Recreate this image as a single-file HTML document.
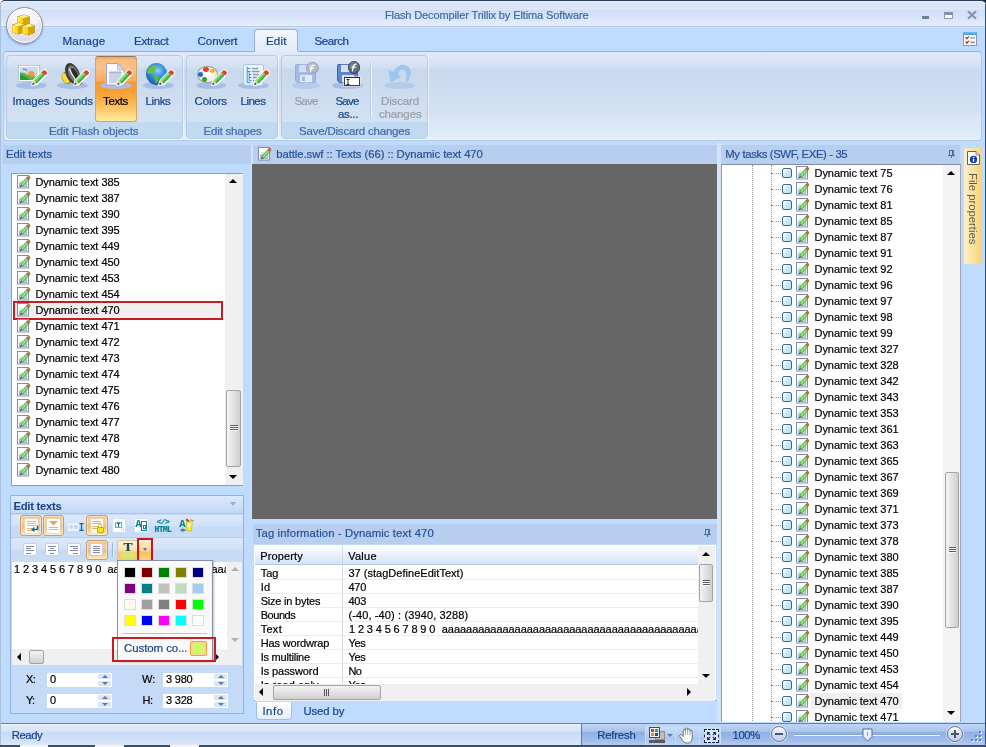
<!DOCTYPE html>
<html><head><meta charset="utf-8"><title>Flash Decompiler Trillix by Eltima Software</title>
<style>
*{box-sizing:border-box;margin:0;padding:0}
html,body{width:986px;height:747px;overflow:hidden;background:#bfdbff}
body{position:relative;font-family:"Liberation Sans",sans-serif;font-size:11px;color:#000}
.a{position:absolute}
.pi{position:absolute}
.t{position:absolute;white-space:nowrap;line-height:14px;-webkit-text-stroke:0.2px currentColor}
.rb{color:#15428b;font-size:11.3px}
.li{position:absolute;left:35px;white-space:nowrap;line-height:14px;font-size:11px}
.ti{position:absolute;left:814px;white-space:nowrap;line-height:14px;font-size:11px}
.cb{position:absolute;left:782px;width:10px;height:10px;border:1px solid #3d678e;border-radius:2px;background:linear-gradient(135deg,#ffffff 10%,#cfeaf8 45%,#b3def4 100%)}
.hd{position:absolute;left:771px;width:10px;height:0;border-top:1px dotted #9a9a9a}
.sw{position:absolute;width:12px;height:11px;border:1px solid #d8dde6}
</style></head><body><div id="w" style="position:absolute;left:0;top:0;width:986px;height:747px;will-change:transform">

<div class="a" style="left:0;top:0;width:986px;height:8px;background:linear-gradient(90deg,#fff 0,#fff 50%,#1a2233 50%)"></div>
<div class="a" style="left:0;top:0;width:986px;height:26px;background:linear-gradient(#e6f2fd 0,#dde9f9 5%,#d9e5f8 28%,#deebfa 33%,#cfddf5 36%,#d6e3f7 60%,#e3effc 100%);border-top:1px solid #2f3e5e;border-radius:5px 5px 0 0"></div>
<div class="a" style="left:0;top:26px;width:986px;height:27px;background:linear-gradient(#cde2fb 0,#cde2fb 1px,#bfdbff 1.5px);border-top:1px solid #bccbe3"></div>
<div class="t" style="left:385px;top:7.6px;font-size:11px;color:#3e6aaa;letter-spacing:-0.115px">Flash Decompiler Trillix by Eltima Software</div>
<div class="a" style="left:922px;top:16.4px;width:7px;height:2.6px;background:#6e7f9f"></div>
<div class="a" style="left:944px;top:12px;width:9.2px;height:7px;border:1px solid #8a99b6;border-top:3px solid #7f8fad;background:#fff"></div>
<svg class="a" style="left:966.6px;top:11px" width="10" height="8" viewBox="0 0 10 8"><path d="M1 0.3L9 7.7M9 0.3L1 7.7" stroke="#8192b0" stroke-width="2.1"/></svg>
<div class="a" style="left:6px;top:7px;width:37px;height:37px;border-radius:50%;background:radial-gradient(circle at 50% 30%,#ffffff 0,#f3f3f8 40%,#dcdbea 70%,#f4f4fa 92%,#ffffff 100%);border:1px solid #8a93a6;box-shadow:0 1px 2px rgba(60,70,90,.45),inset 0 0 0 1px rgba(255,255,255,.8)"></div>
<svg class="a" style="left:16.5px;top:13.5px" width="13" height="13" viewBox="0 0 13 13"><path d="M0.3 2.6 L7.2 0.4 L12.6 2.2 L12.6 9.8 L6 12.6 L0.3 10.4Z" fill="#9a7600"/><path d="M0.6 2.9 L6 4.6 L6 12.2 L0.6 10.2Z" fill="#ffd914"/><path d="M0.6 2.9 L2.6 3.5 L2.6 11 L0.6 10.2Z" fill="#ffe95c"/><path d="M6 4.6 L12.3 2.5 L12.3 9.6 L6 12.2Z" fill="#d9a300"/><path d="M0.6 2.9 L7.2 0.8 L12.3 2.5 L6 4.6Z" fill="#fff08a"/></svg>
<svg class="a" style="left:11.5px;top:22px" width="13" height="13" viewBox="0 0 13 13"><path d="M0.3 2.6 L7.2 0.4 L12.6 2.2 L12.6 9.8 L6 12.6 L0.3 10.4Z" fill="#9a7600"/><path d="M0.6 2.9 L6 4.6 L6 12.2 L0.6 10.2Z" fill="#ffd914"/><path d="M0.6 2.9 L2.6 3.5 L2.6 11 L0.6 10.2Z" fill="#ffe95c"/><path d="M6 4.6 L12.3 2.5 L12.3 9.6 L6 12.2Z" fill="#d9a300"/><path d="M0.6 2.9 L7.2 0.8 L12.3 2.5 L6 4.6Z" fill="#fff08a"/></svg>
<svg class="a" style="left:21.5px;top:22.8px" width="13" height="13" viewBox="0 0 13 13"><path d="M0.3 2.6 L7.2 0.4 L12.6 2.2 L12.6 9.8 L6 12.6 L0.3 10.4Z" fill="#9a7600"/><path d="M0.6 2.9 L6 4.6 L6 12.2 L0.6 10.2Z" fill="#ffd914"/><path d="M0.6 2.9 L2.6 3.5 L2.6 11 L0.6 10.2Z" fill="#ffe95c"/><path d="M6 4.6 L12.3 2.5 L12.3 9.6 L6 12.2Z" fill="#d9a300"/><path d="M0.6 2.9 L7.2 0.8 L12.3 2.5 L6 4.6Z" fill="#fff08a"/></svg>
<div class="a" style="left:254px;top:29px;width:44px;height:25px;background:linear-gradient(#f4f8fe,#dfe9f6);border:1px solid #8db2e3;border-bottom:none;border-radius:4px 4px 0 0"></div>
<div class="t" style="left:62.5px;top:33.8px;font-size:11.6px;color:#15428b;letter-spacing:0.182px">Manage</div>
<div class="t" style="left:134px;top:33.8px;font-size:11.6px;color:#15428b;letter-spacing:-0.225px">Extract</div>
<div class="t" style="left:197.5px;top:33.8px;font-size:11.6px;color:#15428b;letter-spacing:-0.087px">Convert</div>
<div class="t" style="left:266px;top:33.8px;font-size:11.6px;color:#15428b;letter-spacing:0.129px">Edit</div>
<div class="t" style="left:314.5px;top:33.8px;font-size:11.6px;color:#15428b;letter-spacing:-0.456px">Search</div>
<div class="a" style="left:963px;top:32px;width:14px;height:13.6px;background:#fdfdfd;border:1px solid #8d96a6;border-top:none;border-radius:1px"></div>
<div class="a" style="left:963px;top:32px;width:14px;height:3px;background:linear-gradient(#6fc0f2,#3f9be0);border-radius:1px 1px 0 0"></div>
<svg class="a" style="left:965px;top:36px" width="11" height="9" viewBox="0 0 11 9"><path d="M0.6 1.2L1.9 2.8L3.8 0.4M0.6 5.6L1.9 7.2L3.8 4.8" stroke="#b3201a" stroke-width="1.2" fill="none"/><path d="M5.2 2H10M5.2 6.3H10" stroke="#9aa0aa" stroke-width="1.7"/></svg>
<div class="a" style="left:3px;top:51px;width:979px;height:90px;border:1px solid #b2cbea;border-top-color:#8db2e3;border-radius:4px;background:linear-gradient(#dfe9f6 0,#d5e1f2 17%,#c9d9ee 19.5%,#d3e1f3 65%,#e1eefb 97%,#e8f4fd 100%)"></div>
<div class="a" style="left:255px;top:50.5px;width:43px;height:2px;background:#e0e9f6"></div>
<div class="a" style="left:6px;top:55px;width:177px;height:84px;border:1px solid #b4cbe8;border-radius:4px;background:linear-gradient(#dee9f7 0,#d3e0f1 14%,#c8d8ed 16.5%,#d3e1f2 80%);box-shadow:1px 0 0 rgba(255,255,255,.55),0 1px 0 rgba(255,255,255,.55);overflow:hidden"><div class="a" style="left:0;bottom:0;width:100%;height:16px;background:#c2d9f2"></div></div>
<div class="t" style="left:49px;top:123.6px;font-size:11.5px;color:#3e6aaa;letter-spacing:-0.070px">Edit Flash objects</div>
<div class="a" style="left:186px;top:55px;width:92px;height:84px;border:1px solid #b4cbe8;border-radius:4px;background:linear-gradient(#dee9f7 0,#d3e0f1 14%,#c8d8ed 16.5%,#d3e1f2 80%);box-shadow:1px 0 0 rgba(255,255,255,.55),0 1px 0 rgba(255,255,255,.55);overflow:hidden"><div class="a" style="left:0;bottom:0;width:100%;height:16px;background:#c2d9f2"></div></div>
<div class="t" style="left:203.5px;top:123.6px;font-size:11.5px;color:#3e6aaa;letter-spacing:-0.192px">Edit shapes</div>
<div class="a" style="left:281px;top:55px;width:147px;height:84px;border:1px solid #b4cbe8;border-radius:4px;background:linear-gradient(#dee9f7 0,#d3e0f1 14%,#c8d8ed 16.5%,#d3e1f2 80%);box-shadow:1px 0 0 rgba(255,255,255,.55),0 1px 0 rgba(255,255,255,.55);overflow:hidden"><div class="a" style="left:0;bottom:0;width:100%;height:16px;background:#c2d9f2"></div></div>
<div class="t" style="left:299px;top:123.6px;font-size:11.5px;color:#3e6aaa;letter-spacing:-0.203px">Save/Discard changes</div>
<div class="a" style="left:95px;top:56px;width:42px;height:66px;border:1px solid #cfa560;border-top-color:#8f7a58;border-radius:3px;background:linear-gradient(#eaa968 0,#f9bc82 5%,#fbbf88 18%,#f9aa60 38%,#f7972a 40%,#f9a53a 60%,#fcc968 82%,#fee9a4 100%)"></div>
<div class="t" style="left:12.5px;top:93.6px;font-size:11.5px;color:#15428b;letter-spacing:-0.120px">Images</div>
<div class="t" style="left:54.5px;top:93.6px;font-size:11.5px;color:#15428b;letter-spacing:-0.086px">Sounds</div>
<div class="t" style="left:103px;top:93.6px;font-size:11.5px;color:#000;letter-spacing:-0.369px">Texts</div>
<div class="t" style="left:145.5px;top:93.6px;font-size:11.5px;color:#15428b;letter-spacing:-0.372px">Links</div>
<div class="t" style="left:194.5px;top:93.6px;font-size:11.5px;color:#15428b;letter-spacing:-0.122px">Colors</div>
<div class="t" style="left:240.5px;top:93.6px;font-size:11.5px;color:#15428b;letter-spacing:-0.500px">Lines</div>
<div class="t" style="left:294.5px;top:93.6px;font-size:11.5px;color:#979da8;letter-spacing:-0.805px">Save</div>
<div class="t" style="left:335.5px;top:93.6px;font-size:11.5px;color:#15428b;letter-spacing:-0.805px">Save</div>
<div class="t" style="left:338px;top:106.6px;font-size:11.5px;color:#15428b;letter-spacing:-0.347px">as...</div>
<div class="t" style="left:381px;top:93.6px;font-size:11.5px;color:#979da8;letter-spacing:-0.141px">Discard</div>
<div class="t" style="left:379px;top:106.6px;font-size:11.5px;color:#979da8;letter-spacing:-0.141px">changes</div>
<div class="a" style="left:15.5px;top:81.5px;width:31px;height:7px;border-radius:50%;background:rgba(160,186,226,.9)"></div>
<div class="a" style="left:18px;top:65px;width:22px;height:17px;background:#fbfcfe;border:1px solid #b9c6dc"></div>
<svg class="a" style="left:20px;top:67px" width="18" height="13" viewBox="0 0 18 13"><rect width="18" height="13" fill="#c9daf1"/><circle cx="11.3" cy="7.2" r="3.2" fill="#f29a2e"/><path d="M0 5.2 Q5 5.5 9 8.5 Q13 11 18 8.2 V13 H0Z" fill="#55b944"/><path d="M0 7.5 Q5 8 10 13 H0Z" fill="#2f9a32"/><path d="M3 2.2 Q4.3 1.4 5.2 2.8 Q6.2 2.2 7.2 3.6" stroke="#3b5aa0" stroke-width="0.9" fill="none"/></svg>
<svg class="a" style="left:31.1px;top:69.4px;overflow:visible" width="18" height="18" viewBox="0 0 18 18"><path d="M1.2 16 L2.4 11.6 L11.6 1.9 Q13.3 0.4 15.0 1.9 Q16.9 3.6 15.3 5.4 L6.0 15.0 Z" fill="#fff" stroke="#fff" stroke-width="2" stroke-linejoin="round"/><path d="M2.4 11.6 L10.3 3.3 L13.5 6.3 L5.6 14.6 Z" fill="#5ccc4c"/><path d="M2.4 11.6 L10.3 3.3 L11.4 4.3 L3.5 12.6 Z" fill="#9be88a"/><path d="M4.6 13.7 L12.5 5.4 L13.5 6.3 L5.6 14.6 Z" fill="#3a9f38"/><path d="M10.3 3.3 L11.6 1.9 Q13.3 0.4 15.0 1.9 Q16.9 3.6 15.3 5.4 L13.5 6.3 Z" fill="#d9412c"/><path d="M11.3 2.3 Q12.9 0.9 14.2 1.9" stroke="#f08a78" stroke-width="0.9" fill="none"/><path d="M2.4 11.6 L5.6 14.6 L1.2 16 Z" fill="#e6c9a0"/><path d="M1.2 16 L1.9 13.6 L3.6 15.2 Z" fill="#3a2a20"/></svg>
<div class="a" style="left:57.3px;top:81.5px;width:31px;height:7px;border-radius:50%;background:rgba(160,186,226,.9)"></div>
<svg class="a" style="left:60px;top:61px" width="24" height="25" viewBox="0 0 24 25"><ellipse cx="6.6" cy="17" rx="4.6" ry="6.4" transform="rotate(-25 6.6 17)" fill="#b58a10"/><ellipse cx="5.6" cy="17.2" rx="3" ry="5.4" transform="rotate(-25 5.6 17.2)" fill="#f8d84a"/><ellipse cx="12.6" cy="12.6" rx="6.6" ry="11.2" transform="rotate(-25 12.6 12.6)" fill="#3b3b3b"/><ellipse cx="13.6" cy="13" rx="4.7" ry="9" transform="rotate(-25 13.6 13)" fill="#7c7c7c"/><ellipse cx="14.5" cy="13.5" rx="3.1" ry="6.8" transform="rotate(-25 14.5 13.5)" fill="#2c2c2c"/><path d="M9.6 8.2 Q11.5 13.5 16 19.6" stroke="#e8e8e8" stroke-width="1.5" fill="none" stroke-linecap="round"/><ellipse cx="20" cy="20.6" rx="2" ry="2.6" fill="none" stroke="#2c2c2c" stroke-width="1"/></svg>
<svg class="a" style="left:73.1px;top:69.4px;overflow:visible" width="18" height="18" viewBox="0 0 18 18"><path d="M1.2 16 L2.4 11.6 L11.6 1.9 Q13.3 0.4 15.0 1.9 Q16.9 3.6 15.3 5.4 L6.0 15.0 Z" fill="#fff" stroke="#fff" stroke-width="2" stroke-linejoin="round"/><path d="M2.4 11.6 L10.3 3.3 L13.5 6.3 L5.6 14.6 Z" fill="#5ccc4c"/><path d="M2.4 11.6 L10.3 3.3 L11.4 4.3 L3.5 12.6 Z" fill="#9be88a"/><path d="M4.6 13.7 L12.5 5.4 L13.5 6.3 L5.6 14.6 Z" fill="#3a9f38"/><path d="M10.3 3.3 L11.6 1.9 Q13.3 0.4 15.0 1.9 Q16.9 3.6 15.3 5.4 L13.5 6.3 Z" fill="#d9412c"/><path d="M11.3 2.3 Q12.9 0.9 14.2 1.9" stroke="#f08a78" stroke-width="0.9" fill="none"/><path d="M2.4 11.6 L5.6 14.6 L1.2 16 Z" fill="#e6c9a0"/><path d="M1.2 16 L1.9 13.6 L3.6 15.2 Z" fill="#3a2a20"/></svg>
<div class="a" style="left:100px;top:81.5px;width:31.5px;height:7px;border-radius:50%;background:rgba(168,192,230,.95)"></div>
<svg class="a" style="left:105.5px;top:62.7px" width="19" height="23" viewBox="0 0 19 23"><path d="M0.5 0.5 H11.5 L18 7 V22 H0.5Z" fill="#fcfdff" stroke="#9daac2"/><path d="M11.5 0.5 V7 H18Z" fill="#d3dcec" stroke="#9daac2" stroke-width=".7"/><rect x="3" y="8.5" width="12.5" height="2.2" fill="#a9b6d2"/><rect x="3" y="10.7" width="12.5" height="9.5" fill="#cad3e8"/></svg>
<svg class="a" style="left:115.8px;top:69.4px;overflow:visible" width="18" height="18" viewBox="0 0 18 18"><path d="M1.2 16 L2.4 11.6 L11.6 1.9 Q13.3 0.4 15.0 1.9 Q16.9 3.6 15.3 5.4 L6.0 15.0 Z" fill="#fff" stroke="#fff" stroke-width="2" stroke-linejoin="round"/><path d="M2.4 11.6 L10.3 3.3 L13.5 6.3 L5.6 14.6 Z" fill="#5ccc4c"/><path d="M2.4 11.6 L10.3 3.3 L11.4 4.3 L3.5 12.6 Z" fill="#9be88a"/><path d="M4.6 13.7 L12.5 5.4 L13.5 6.3 L5.6 14.6 Z" fill="#3a9f38"/><path d="M10.3 3.3 L11.6 1.9 Q13.3 0.4 15.0 1.9 Q16.9 3.6 15.3 5.4 L13.5 6.3 Z" fill="#d9412c"/><path d="M11.3 2.3 Q12.9 0.9 14.2 1.9" stroke="#f08a78" stroke-width="0.9" fill="none"/><path d="M2.4 11.6 L5.6 14.6 L1.2 16 Z" fill="#e6c9a0"/><path d="M1.2 16 L1.9 13.6 L3.6 15.2 Z" fill="#3a2a20"/></svg>
<div class="a" style="left:142.5px;top:81.5px;width:31px;height:7px;border-radius:50%;background:rgba(160,186,226,.9)"></div>
<div class="a" style="left:146px;top:63px;width:21px;height:21.5px;border-radius:50%;background:radial-gradient(circle at 55% 35%,#8fd0ff 0,#3a92e2 35%,#1f66c2 70%,#0f418f 100%)"></div>
<svg class="a" style="left:146px;top:63px" width="21" height="22" viewBox="0 0 21 22"><path d="M1.6 7 Q4 2.5 8.5 1.8 Q10.5 3 9 5 Q10.8 6.5 8.8 8.3 Q7.8 11.5 5 10.3 Q3.4 12.6 1.4 10.2 Q0.8 8.6 1.6 7Z" fill="#66c246"/><path d="M8 13 Q11 11.5 13 14 Q13.5 18 10.5 20.4 Q8.5 19 8.6 16 Q7.4 14.4 8 13Z" fill="#58b83e"/><path d="M12.5 3 Q14.8 3.2 15.6 5 Q14.2 5.6 12.8 4.6Z" fill="#66c246"/></svg>
<svg class="a" style="left:158.0px;top:69.4px;overflow:visible" width="18" height="18" viewBox="0 0 18 18"><path d="M1.2 16 L2.4 11.6 L11.6 1.9 Q13.3 0.4 15.0 1.9 Q16.9 3.6 15.3 5.4 L6.0 15.0 Z" fill="#fff" stroke="#fff" stroke-width="2" stroke-linejoin="round"/><path d="M2.4 11.6 L10.3 3.3 L13.5 6.3 L5.6 14.6 Z" fill="#5ccc4c"/><path d="M2.4 11.6 L10.3 3.3 L11.4 4.3 L3.5 12.6 Z" fill="#9be88a"/><path d="M4.6 13.7 L12.5 5.4 L13.5 6.3 L5.6 14.6 Z" fill="#3a9f38"/><path d="M10.3 3.3 L11.6 1.9 Q13.3 0.4 15.0 1.9 Q16.9 3.6 15.3 5.4 L13.5 6.3 Z" fill="#d9412c"/><path d="M11.3 2.3 Q12.9 0.9 14.2 1.9" stroke="#f08a78" stroke-width="0.9" fill="none"/><path d="M2.4 11.6 L5.6 14.6 L1.2 16 Z" fill="#e6c9a0"/><path d="M1.2 16 L1.9 13.6 L3.6 15.2 Z" fill="#3a2a20"/></svg>
<div class="a" style="left:195.8px;top:81.5px;width:30.5px;height:7px;border-radius:50%;background:rgba(160,186,226,.9)"></div>
<div class="a" style="left:197px;top:65.8px;width:20.5px;height:17.5px;border-radius:50%;background:radial-gradient(circle at 45% 40%,#ffffff 0,#f2f2f2 55%,#d2d2d2 100%);border:1px solid #9c9c9c"></div>
<div class="a" style="left:203.1px;top:67.13499999999999px;width:5.8px;height:4.93px;border-radius:50%;background:#e8402a"></div>
<div class="a" style="left:209.7px;top:68.875px;width:5.0px;height:4.25px;border-radius:50%;background:#e8b820"></div>
<div class="a" style="left:198.20000000000002px;top:72.19000000000001px;width:5.2px;height:4.42px;border-radius:50%;background:#2a66d6"></div>
<div class="a" style="left:201.7px;top:76.735px;width:5.8px;height:4.93px;border-radius:50%;background:#2fa52f"></div>
<svg class="a" style="left:210.8px;top:69.4px;overflow:visible" width="18" height="18" viewBox="0 0 18 18"><path d="M1.2 16 L2.4 11.6 L11.6 1.9 Q13.3 0.4 15.0 1.9 Q16.9 3.6 15.3 5.4 L6.0 15.0 Z" fill="#fff" stroke="#fff" stroke-width="2" stroke-linejoin="round"/><path d="M2.4 11.6 L10.3 3.3 L13.5 6.3 L5.6 14.6 Z" fill="#5ccc4c"/><path d="M2.4 11.6 L10.3 3.3 L11.4 4.3 L3.5 12.6 Z" fill="#9be88a"/><path d="M4.6 13.7 L12.5 5.4 L13.5 6.3 L5.6 14.6 Z" fill="#3a9f38"/><path d="M10.3 3.3 L11.6 1.9 Q13.3 0.4 15.0 1.9 Q16.9 3.6 15.3 5.4 L13.5 6.3 Z" fill="#d9412c"/><path d="M11.3 2.3 Q12.9 0.9 14.2 1.9" stroke="#f08a78" stroke-width="0.9" fill="none"/><path d="M2.4 11.6 L5.6 14.6 L1.2 16 Z" fill="#e6c9a0"/><path d="M1.2 16 L1.9 13.6 L3.6 15.2 Z" fill="#3a2a20"/></svg>
<div class="a" style="left:238px;top:81.5px;width:31px;height:7px;border-radius:50%;background:rgba(160,186,226,.9)"></div>
<div class="a" style="left:242.5px;top:64px;width:21.5px;height:21.5px;background:linear-gradient(#f2f8fe,#dfecfb);border:1px solid #a9c5ea;border-radius:3px"></div>
<svg class="a" style="left:242.5px;top:64px" width="22" height="22" viewBox="0 0 22 22"><path d="M4.2 2.5 V18.5 M4.2 4.5 H7.5 M4.2 7.5 H7.5 M6.2 7.5 V16.5 M6.2 10.5 H8.5 M6.2 13.5 H8.5 M6.2 16.5 H8.5 M4.2 18.5 H7.5" stroke="#3f93dc" stroke-width="1" fill="none"/><path d="M9 4.5 H15.5 M9 7.5 H16.5 M10 10.5 H16 M10 13.5 H14.5 M10 16.5 H13" stroke="#8f9aa8" stroke-width="1.3" fill="none"/></svg>
<svg class="a" style="left:252.8px;top:69.4px;overflow:visible" width="18" height="18" viewBox="0 0 18 18"><path d="M1.2 16 L2.4 11.6 L11.6 1.9 Q13.3 0.4 15.0 1.9 Q16.9 3.6 15.3 5.4 L6.0 15.0 Z" fill="#fff" stroke="#fff" stroke-width="2" stroke-linejoin="round"/><path d="M2.4 11.6 L10.3 3.3 L13.5 6.3 L5.6 14.6 Z" fill="#5ccc4c"/><path d="M2.4 11.6 L10.3 3.3 L11.4 4.3 L3.5 12.6 Z" fill="#9be88a"/><path d="M4.6 13.7 L12.5 5.4 L13.5 6.3 L5.6 14.6 Z" fill="#3a9f38"/><path d="M10.3 3.3 L11.6 1.9 Q13.3 0.4 15.0 1.9 Q16.9 3.6 15.3 5.4 L13.5 6.3 Z" fill="#d9412c"/><path d="M11.3 2.3 Q12.9 0.9 14.2 1.9" stroke="#f08a78" stroke-width="0.9" fill="none"/><path d="M2.4 11.6 L5.6 14.6 L1.2 16 Z" fill="#e6c9a0"/><path d="M1.2 16 L1.9 13.6 L3.6 15.2 Z" fill="#3a2a20"/></svg>
<div class="a" style="left:291.8px;top:81.5px;width:28.5px;height:7px;border-radius:50%;background:rgba(176,198,232,.8)"></div>
<svg class="a" style="left:295px;top:63.8px" width="21" height="19" viewBox="0 0 21 19"><path d="M0.5 1.5 Q0.5 0.5 1.5 0.5 H19.5 Q20.5 0.5 20.5 1.5 V17.5 Q20.5 18.5 19.5 18.5 H2.5 L0.5 16.5Z" fill="#a3bbe9" stroke="#92abdc"/><rect x="4" y="0.8" width="9" height="7.2" fill="#d3ddf0"/><rect x="5" y="11" width="12" height="7.3" fill="#e3e9f5"/><rect x="7" y="12.5" width="3" height="4.5" fill="#a9b9dc"/></svg>
<div class="a" style="left:306.2px;top:61.8px;width:12.4px;height:12.4px;border-radius:50%;background:radial-gradient(circle at 40% 30%,#c3c9d6,#a2aabb);border:1px solid #98a1b4"></div>
<svg class="a" style="left:308.4px;top:63.5px" width="8" height="9" viewBox="0 0 8 9"><path d="M6.3 1 Q3.6 1.2 3.3 4 L2.4 8 M2 4.2 H5.3" stroke="#fff" stroke-width="1.2" fill="none" stroke-linecap="round"/></svg>
<div class="a" style="left:332.3px;top:81.5px;width:31px;height:7px;border-radius:50%;background:rgba(160,186,226,.9)"></div>
<svg class="a" style="left:337.3px;top:63.8px" width="21" height="19" viewBox="0 0 21 19"><path d="M0.5 1.5 Q0.5 0.5 1.5 0.5 H19.5 Q20.5 0.5 20.5 1.5 V17.5 Q20.5 18.5 19.5 18.5 H2.5 L0.5 16.5Z" fill="#5f86d3" stroke="#3f63b0"/><rect x="4" y="0.8" width="9" height="7.2" fill="#d9dfea"/><rect x="5" y="11" width="12" height="7.3" fill="#dfe5f0"/><rect x="7" y="12.5" width="3" height="4.5" fill="#5f86d3"/></svg>
<div class="a" style="left:348.1px;top:61.3px;width:12.4px;height:12.4px;border-radius:50%;background:radial-gradient(circle at 40% 30%,#7d8796,#4f5968);border:1px solid #3f4858"></div>
<svg class="a" style="left:350.3px;top:63.0px" width="8" height="9" viewBox="0 0 8 9"><path d="M6.3 1 Q3.6 1.2 3.3 4 L2.4 8 M2 4.2 H5.3" stroke="#fff" stroke-width="1.2" fill="none" stroke-linecap="round"/></svg>
<div class="a" style="left:344.4px;top:77px;width:16px;height:9px;background:#fff;border:1px solid #3c3c3c;border-top:1.5px solid #2a2a2a;box-shadow:0 0 0 .6px #e8e8e8"></div>
<svg class="a" style="left:346px;top:78.6px" width="4" height="6" viewBox="0 0 4 6"><path d="M0.5 0.5H3.5M2 0.5V5.5M0.5 5.5H3.5" stroke="#111" stroke-width=".9" fill="none"/></svg>
<div class="a" style="left:384px;top:81.5px;width:31px;height:7px;border-radius:50%;background:rgba(176,198,232,.8)"></div>
<svg class="a" style="left:387px;top:64px" width="25" height="20" viewBox="0 0 25 20"><path d="M2 6.5 L6.5 8.5 Q10 1 16.5 1.3 Q23.5 2 23.3 9 Q23 14 20 17.5 L19 16 Q20.5 12 19.5 8.5 Q18 4.8 14.5 5.3 Q11.5 6 10 10.5 L13.5 12.5 L4 18 Z" fill="#9cc5f0" stroke="#8fbdee" stroke-width=".5"/></svg>
<div class="a" style="left:371px;top:61.5px;width:1px;height:55px;background:#eaf2fb;box-shadow:-1px 0 0 #b9cde8"></div>
<div class="a" style="left:3px;top:145px;width:248px;height:19px;background:#b8ceee"></div>
<div class="t" style="left:6px;top:146.6px;font-size:11.3px;color:#24509a;letter-spacing:-0.047px">Edit texts</div>
<div class="a" style="left:11px;top:173px;width:232px;height:313px;background:#fff;border:1px solid #7f9fd0"></div>
<svg class="pi" style="left:17px;top:174.2px" width="14" height="15" viewBox="0 0 14 15"><rect x="0.5" y="1.5" width="11" height="12.5" fill="#fefefe" stroke="#7d8cb0"/><path d="M2.5 6.8H6" stroke="#c3cde2" stroke-width="1"/><rect x="2.5" y="8.8" width="7" height="3.7" fill="#cbd5e9" stroke="#a9b5d0" stroke-width="1"/><g transform="translate(-0.6,0.7)"><path d="M4.4 9.6 L10.1 3.1 L12.3 5.0 L6.6 11.5 Z" fill="#6ed65c" stroke="#45a541" stroke-width="0.7"/><path d="M5.6 10.4 L11.1 4.2" stroke="#a9f098" stroke-width="0.9"/><path d="M10.1 3.1 L11.3 1.7 Q12.6 1.0 13.4 2.2 Q14 3.4 13.4 3.9 L12.3 5.0 Z" fill="#db5a44" stroke="#c4442f" stroke-width="0.4"/><path d="M4.4 9.6 L6.6 11.5 L3.6 12.5 Z" fill="#7a6a50"/><path d="M4.0 11.4 L4.9 12.1 L3.6 12.5 Z" fill="#222"/></g></svg>
<div class="t" style="left:35.4px;top:174.6px;font-size:11px;color:#000;letter-spacing:-0.049px">Dynamic text 385</div>
<svg class="pi" style="left:17px;top:190.2px" width="14" height="15" viewBox="0 0 14 15"><rect x="0.5" y="1.5" width="11" height="12.5" fill="#fefefe" stroke="#7d8cb0"/><path d="M2.5 6.8H6" stroke="#c3cde2" stroke-width="1"/><rect x="2.5" y="8.8" width="7" height="3.7" fill="#cbd5e9" stroke="#a9b5d0" stroke-width="1"/><g transform="translate(-0.6,0.7)"><path d="M4.4 9.6 L10.1 3.1 L12.3 5.0 L6.6 11.5 Z" fill="#6ed65c" stroke="#45a541" stroke-width="0.7"/><path d="M5.6 10.4 L11.1 4.2" stroke="#a9f098" stroke-width="0.9"/><path d="M10.1 3.1 L11.3 1.7 Q12.6 1.0 13.4 2.2 Q14 3.4 13.4 3.9 L12.3 5.0 Z" fill="#db5a44" stroke="#c4442f" stroke-width="0.4"/><path d="M4.4 9.6 L6.6 11.5 L3.6 12.5 Z" fill="#7a6a50"/><path d="M4.0 11.4 L4.9 12.1 L3.6 12.5 Z" fill="#222"/></g></svg>
<div class="t" style="left:35.4px;top:190.6px;font-size:11px;color:#000;letter-spacing:-0.049px">Dynamic text 387</div>
<svg class="pi" style="left:17px;top:206.2px" width="14" height="15" viewBox="0 0 14 15"><rect x="0.5" y="1.5" width="11" height="12.5" fill="#fefefe" stroke="#7d8cb0"/><path d="M2.5 6.8H6" stroke="#c3cde2" stroke-width="1"/><rect x="2.5" y="8.8" width="7" height="3.7" fill="#cbd5e9" stroke="#a9b5d0" stroke-width="1"/><g transform="translate(-0.6,0.7)"><path d="M4.4 9.6 L10.1 3.1 L12.3 5.0 L6.6 11.5 Z" fill="#6ed65c" stroke="#45a541" stroke-width="0.7"/><path d="M5.6 10.4 L11.1 4.2" stroke="#a9f098" stroke-width="0.9"/><path d="M10.1 3.1 L11.3 1.7 Q12.6 1.0 13.4 2.2 Q14 3.4 13.4 3.9 L12.3 5.0 Z" fill="#db5a44" stroke="#c4442f" stroke-width="0.4"/><path d="M4.4 9.6 L6.6 11.5 L3.6 12.5 Z" fill="#7a6a50"/><path d="M4.0 11.4 L4.9 12.1 L3.6 12.5 Z" fill="#222"/></g></svg>
<div class="t" style="left:35.4px;top:206.6px;font-size:11px;color:#000;letter-spacing:-0.049px">Dynamic text 390</div>
<svg class="pi" style="left:17px;top:222.2px" width="14" height="15" viewBox="0 0 14 15"><rect x="0.5" y="1.5" width="11" height="12.5" fill="#fefefe" stroke="#7d8cb0"/><path d="M2.5 6.8H6" stroke="#c3cde2" stroke-width="1"/><rect x="2.5" y="8.8" width="7" height="3.7" fill="#cbd5e9" stroke="#a9b5d0" stroke-width="1"/><g transform="translate(-0.6,0.7)"><path d="M4.4 9.6 L10.1 3.1 L12.3 5.0 L6.6 11.5 Z" fill="#6ed65c" stroke="#45a541" stroke-width="0.7"/><path d="M5.6 10.4 L11.1 4.2" stroke="#a9f098" stroke-width="0.9"/><path d="M10.1 3.1 L11.3 1.7 Q12.6 1.0 13.4 2.2 Q14 3.4 13.4 3.9 L12.3 5.0 Z" fill="#db5a44" stroke="#c4442f" stroke-width="0.4"/><path d="M4.4 9.6 L6.6 11.5 L3.6 12.5 Z" fill="#7a6a50"/><path d="M4.0 11.4 L4.9 12.1 L3.6 12.5 Z" fill="#222"/></g></svg>
<div class="t" style="left:35.4px;top:222.6px;font-size:11px;color:#000;letter-spacing:-0.049px">Dynamic text 395</div>
<svg class="pi" style="left:17px;top:238.2px" width="14" height="15" viewBox="0 0 14 15"><rect x="0.5" y="1.5" width="11" height="12.5" fill="#fefefe" stroke="#7d8cb0"/><path d="M2.5 6.8H6" stroke="#c3cde2" stroke-width="1"/><rect x="2.5" y="8.8" width="7" height="3.7" fill="#cbd5e9" stroke="#a9b5d0" stroke-width="1"/><g transform="translate(-0.6,0.7)"><path d="M4.4 9.6 L10.1 3.1 L12.3 5.0 L6.6 11.5 Z" fill="#6ed65c" stroke="#45a541" stroke-width="0.7"/><path d="M5.6 10.4 L11.1 4.2" stroke="#a9f098" stroke-width="0.9"/><path d="M10.1 3.1 L11.3 1.7 Q12.6 1.0 13.4 2.2 Q14 3.4 13.4 3.9 L12.3 5.0 Z" fill="#db5a44" stroke="#c4442f" stroke-width="0.4"/><path d="M4.4 9.6 L6.6 11.5 L3.6 12.5 Z" fill="#7a6a50"/><path d="M4.0 11.4 L4.9 12.1 L3.6 12.5 Z" fill="#222"/></g></svg>
<div class="t" style="left:35.4px;top:238.6px;font-size:11px;color:#000;letter-spacing:-0.049px">Dynamic text 449</div>
<svg class="pi" style="left:17px;top:254.2px" width="14" height="15" viewBox="0 0 14 15"><rect x="0.5" y="1.5" width="11" height="12.5" fill="#fefefe" stroke="#7d8cb0"/><path d="M2.5 6.8H6" stroke="#c3cde2" stroke-width="1"/><rect x="2.5" y="8.8" width="7" height="3.7" fill="#cbd5e9" stroke="#a9b5d0" stroke-width="1"/><g transform="translate(-0.6,0.7)"><path d="M4.4 9.6 L10.1 3.1 L12.3 5.0 L6.6 11.5 Z" fill="#6ed65c" stroke="#45a541" stroke-width="0.7"/><path d="M5.6 10.4 L11.1 4.2" stroke="#a9f098" stroke-width="0.9"/><path d="M10.1 3.1 L11.3 1.7 Q12.6 1.0 13.4 2.2 Q14 3.4 13.4 3.9 L12.3 5.0 Z" fill="#db5a44" stroke="#c4442f" stroke-width="0.4"/><path d="M4.4 9.6 L6.6 11.5 L3.6 12.5 Z" fill="#7a6a50"/><path d="M4.0 11.4 L4.9 12.1 L3.6 12.5 Z" fill="#222"/></g></svg>
<div class="t" style="left:35.4px;top:254.6px;font-size:11px;color:#000;letter-spacing:-0.049px">Dynamic text 450</div>
<svg class="pi" style="left:17px;top:270.2px" width="14" height="15" viewBox="0 0 14 15"><rect x="0.5" y="1.5" width="11" height="12.5" fill="#fefefe" stroke="#7d8cb0"/><path d="M2.5 6.8H6" stroke="#c3cde2" stroke-width="1"/><rect x="2.5" y="8.8" width="7" height="3.7" fill="#cbd5e9" stroke="#a9b5d0" stroke-width="1"/><g transform="translate(-0.6,0.7)"><path d="M4.4 9.6 L10.1 3.1 L12.3 5.0 L6.6 11.5 Z" fill="#6ed65c" stroke="#45a541" stroke-width="0.7"/><path d="M5.6 10.4 L11.1 4.2" stroke="#a9f098" stroke-width="0.9"/><path d="M10.1 3.1 L11.3 1.7 Q12.6 1.0 13.4 2.2 Q14 3.4 13.4 3.9 L12.3 5.0 Z" fill="#db5a44" stroke="#c4442f" stroke-width="0.4"/><path d="M4.4 9.6 L6.6 11.5 L3.6 12.5 Z" fill="#7a6a50"/><path d="M4.0 11.4 L4.9 12.1 L3.6 12.5 Z" fill="#222"/></g></svg>
<div class="t" style="left:35.4px;top:270.6px;font-size:11px;color:#000;letter-spacing:-0.049px">Dynamic text 453</div>
<svg class="pi" style="left:17px;top:286.2px" width="14" height="15" viewBox="0 0 14 15"><rect x="0.5" y="1.5" width="11" height="12.5" fill="#fefefe" stroke="#7d8cb0"/><path d="M2.5 6.8H6" stroke="#c3cde2" stroke-width="1"/><rect x="2.5" y="8.8" width="7" height="3.7" fill="#cbd5e9" stroke="#a9b5d0" stroke-width="1"/><g transform="translate(-0.6,0.7)"><path d="M4.4 9.6 L10.1 3.1 L12.3 5.0 L6.6 11.5 Z" fill="#6ed65c" stroke="#45a541" stroke-width="0.7"/><path d="M5.6 10.4 L11.1 4.2" stroke="#a9f098" stroke-width="0.9"/><path d="M10.1 3.1 L11.3 1.7 Q12.6 1.0 13.4 2.2 Q14 3.4 13.4 3.9 L12.3 5.0 Z" fill="#db5a44" stroke="#c4442f" stroke-width="0.4"/><path d="M4.4 9.6 L6.6 11.5 L3.6 12.5 Z" fill="#7a6a50"/><path d="M4.0 11.4 L4.9 12.1 L3.6 12.5 Z" fill="#222"/></g></svg>
<div class="t" style="left:35.4px;top:286.6px;font-size:11px;color:#000;letter-spacing:-0.049px">Dynamic text 454</div>
<div class="a" style="left:13px;top:301px;width:210px;height:19px;background:#f0f0f0;border:2px solid #c81c24"></div>
<svg class="pi" style="left:17px;top:302.2px" width="14" height="15" viewBox="0 0 14 15"><rect x="0.5" y="1.5" width="11" height="12.5" fill="#fefefe" stroke="#7d8cb0"/><path d="M2.5 6.8H6" stroke="#c3cde2" stroke-width="1"/><rect x="2.5" y="8.8" width="7" height="3.7" fill="#cbd5e9" stroke="#a9b5d0" stroke-width="1"/><g transform="translate(-0.6,0.7)"><path d="M4.4 9.6 L10.1 3.1 L12.3 5.0 L6.6 11.5 Z" fill="#6ed65c" stroke="#45a541" stroke-width="0.7"/><path d="M5.6 10.4 L11.1 4.2" stroke="#a9f098" stroke-width="0.9"/><path d="M10.1 3.1 L11.3 1.7 Q12.6 1.0 13.4 2.2 Q14 3.4 13.4 3.9 L12.3 5.0 Z" fill="#db5a44" stroke="#c4442f" stroke-width="0.4"/><path d="M4.4 9.6 L6.6 11.5 L3.6 12.5 Z" fill="#7a6a50"/><path d="M4.0 11.4 L4.9 12.1 L3.6 12.5 Z" fill="#222"/></g></svg>
<div class="t" style="left:35.4px;top:302.6px;font-size:11px;color:#000;letter-spacing:-0.049px">Dynamic text 470</div>
<svg class="pi" style="left:17px;top:318.2px" width="14" height="15" viewBox="0 0 14 15"><rect x="0.5" y="1.5" width="11" height="12.5" fill="#fefefe" stroke="#7d8cb0"/><path d="M2.5 6.8H6" stroke="#c3cde2" stroke-width="1"/><rect x="2.5" y="8.8" width="7" height="3.7" fill="#cbd5e9" stroke="#a9b5d0" stroke-width="1"/><g transform="translate(-0.6,0.7)"><path d="M4.4 9.6 L10.1 3.1 L12.3 5.0 L6.6 11.5 Z" fill="#6ed65c" stroke="#45a541" stroke-width="0.7"/><path d="M5.6 10.4 L11.1 4.2" stroke="#a9f098" stroke-width="0.9"/><path d="M10.1 3.1 L11.3 1.7 Q12.6 1.0 13.4 2.2 Q14 3.4 13.4 3.9 L12.3 5.0 Z" fill="#db5a44" stroke="#c4442f" stroke-width="0.4"/><path d="M4.4 9.6 L6.6 11.5 L3.6 12.5 Z" fill="#7a6a50"/><path d="M4.0 11.4 L4.9 12.1 L3.6 12.5 Z" fill="#222"/></g></svg>
<div class="t" style="left:35.4px;top:318.6px;font-size:11px;color:#000;letter-spacing:-0.049px">Dynamic text 471</div>
<svg class="pi" style="left:17px;top:334.2px" width="14" height="15" viewBox="0 0 14 15"><rect x="0.5" y="1.5" width="11" height="12.5" fill="#fefefe" stroke="#7d8cb0"/><path d="M2.5 6.8H6" stroke="#c3cde2" stroke-width="1"/><rect x="2.5" y="8.8" width="7" height="3.7" fill="#cbd5e9" stroke="#a9b5d0" stroke-width="1"/><g transform="translate(-0.6,0.7)"><path d="M4.4 9.6 L10.1 3.1 L12.3 5.0 L6.6 11.5 Z" fill="#6ed65c" stroke="#45a541" stroke-width="0.7"/><path d="M5.6 10.4 L11.1 4.2" stroke="#a9f098" stroke-width="0.9"/><path d="M10.1 3.1 L11.3 1.7 Q12.6 1.0 13.4 2.2 Q14 3.4 13.4 3.9 L12.3 5.0 Z" fill="#db5a44" stroke="#c4442f" stroke-width="0.4"/><path d="M4.4 9.6 L6.6 11.5 L3.6 12.5 Z" fill="#7a6a50"/><path d="M4.0 11.4 L4.9 12.1 L3.6 12.5 Z" fill="#222"/></g></svg>
<div class="t" style="left:35.4px;top:334.6px;font-size:11px;color:#000;letter-spacing:-0.049px">Dynamic text 472</div>
<svg class="pi" style="left:17px;top:350.2px" width="14" height="15" viewBox="0 0 14 15"><rect x="0.5" y="1.5" width="11" height="12.5" fill="#fefefe" stroke="#7d8cb0"/><path d="M2.5 6.8H6" stroke="#c3cde2" stroke-width="1"/><rect x="2.5" y="8.8" width="7" height="3.7" fill="#cbd5e9" stroke="#a9b5d0" stroke-width="1"/><g transform="translate(-0.6,0.7)"><path d="M4.4 9.6 L10.1 3.1 L12.3 5.0 L6.6 11.5 Z" fill="#6ed65c" stroke="#45a541" stroke-width="0.7"/><path d="M5.6 10.4 L11.1 4.2" stroke="#a9f098" stroke-width="0.9"/><path d="M10.1 3.1 L11.3 1.7 Q12.6 1.0 13.4 2.2 Q14 3.4 13.4 3.9 L12.3 5.0 Z" fill="#db5a44" stroke="#c4442f" stroke-width="0.4"/><path d="M4.4 9.6 L6.6 11.5 L3.6 12.5 Z" fill="#7a6a50"/><path d="M4.0 11.4 L4.9 12.1 L3.6 12.5 Z" fill="#222"/></g></svg>
<div class="t" style="left:35.4px;top:350.6px;font-size:11px;color:#000;letter-spacing:-0.049px">Dynamic text 473</div>
<svg class="pi" style="left:17px;top:366.2px" width="14" height="15" viewBox="0 0 14 15"><rect x="0.5" y="1.5" width="11" height="12.5" fill="#fefefe" stroke="#7d8cb0"/><path d="M2.5 6.8H6" stroke="#c3cde2" stroke-width="1"/><rect x="2.5" y="8.8" width="7" height="3.7" fill="#cbd5e9" stroke="#a9b5d0" stroke-width="1"/><g transform="translate(-0.6,0.7)"><path d="M4.4 9.6 L10.1 3.1 L12.3 5.0 L6.6 11.5 Z" fill="#6ed65c" stroke="#45a541" stroke-width="0.7"/><path d="M5.6 10.4 L11.1 4.2" stroke="#a9f098" stroke-width="0.9"/><path d="M10.1 3.1 L11.3 1.7 Q12.6 1.0 13.4 2.2 Q14 3.4 13.4 3.9 L12.3 5.0 Z" fill="#db5a44" stroke="#c4442f" stroke-width="0.4"/><path d="M4.4 9.6 L6.6 11.5 L3.6 12.5 Z" fill="#7a6a50"/><path d="M4.0 11.4 L4.9 12.1 L3.6 12.5 Z" fill="#222"/></g></svg>
<div class="t" style="left:35.4px;top:366.6px;font-size:11px;color:#000;letter-spacing:-0.049px">Dynamic text 474</div>
<svg class="pi" style="left:17px;top:382.2px" width="14" height="15" viewBox="0 0 14 15"><rect x="0.5" y="1.5" width="11" height="12.5" fill="#fefefe" stroke="#7d8cb0"/><path d="M2.5 6.8H6" stroke="#c3cde2" stroke-width="1"/><rect x="2.5" y="8.8" width="7" height="3.7" fill="#cbd5e9" stroke="#a9b5d0" stroke-width="1"/><g transform="translate(-0.6,0.7)"><path d="M4.4 9.6 L10.1 3.1 L12.3 5.0 L6.6 11.5 Z" fill="#6ed65c" stroke="#45a541" stroke-width="0.7"/><path d="M5.6 10.4 L11.1 4.2" stroke="#a9f098" stroke-width="0.9"/><path d="M10.1 3.1 L11.3 1.7 Q12.6 1.0 13.4 2.2 Q14 3.4 13.4 3.9 L12.3 5.0 Z" fill="#db5a44" stroke="#c4442f" stroke-width="0.4"/><path d="M4.4 9.6 L6.6 11.5 L3.6 12.5 Z" fill="#7a6a50"/><path d="M4.0 11.4 L4.9 12.1 L3.6 12.5 Z" fill="#222"/></g></svg>
<div class="t" style="left:35.4px;top:382.6px;font-size:11px;color:#000;letter-spacing:-0.049px">Dynamic text 475</div>
<svg class="pi" style="left:17px;top:398.2px" width="14" height="15" viewBox="0 0 14 15"><rect x="0.5" y="1.5" width="11" height="12.5" fill="#fefefe" stroke="#7d8cb0"/><path d="M2.5 6.8H6" stroke="#c3cde2" stroke-width="1"/><rect x="2.5" y="8.8" width="7" height="3.7" fill="#cbd5e9" stroke="#a9b5d0" stroke-width="1"/><g transform="translate(-0.6,0.7)"><path d="M4.4 9.6 L10.1 3.1 L12.3 5.0 L6.6 11.5 Z" fill="#6ed65c" stroke="#45a541" stroke-width="0.7"/><path d="M5.6 10.4 L11.1 4.2" stroke="#a9f098" stroke-width="0.9"/><path d="M10.1 3.1 L11.3 1.7 Q12.6 1.0 13.4 2.2 Q14 3.4 13.4 3.9 L12.3 5.0 Z" fill="#db5a44" stroke="#c4442f" stroke-width="0.4"/><path d="M4.4 9.6 L6.6 11.5 L3.6 12.5 Z" fill="#7a6a50"/><path d="M4.0 11.4 L4.9 12.1 L3.6 12.5 Z" fill="#222"/></g></svg>
<div class="t" style="left:35.4px;top:398.6px;font-size:11px;color:#000;letter-spacing:-0.049px">Dynamic text 476</div>
<svg class="pi" style="left:17px;top:414.2px" width="14" height="15" viewBox="0 0 14 15"><rect x="0.5" y="1.5" width="11" height="12.5" fill="#fefefe" stroke="#7d8cb0"/><path d="M2.5 6.8H6" stroke="#c3cde2" stroke-width="1"/><rect x="2.5" y="8.8" width="7" height="3.7" fill="#cbd5e9" stroke="#a9b5d0" stroke-width="1"/><g transform="translate(-0.6,0.7)"><path d="M4.4 9.6 L10.1 3.1 L12.3 5.0 L6.6 11.5 Z" fill="#6ed65c" stroke="#45a541" stroke-width="0.7"/><path d="M5.6 10.4 L11.1 4.2" stroke="#a9f098" stroke-width="0.9"/><path d="M10.1 3.1 L11.3 1.7 Q12.6 1.0 13.4 2.2 Q14 3.4 13.4 3.9 L12.3 5.0 Z" fill="#db5a44" stroke="#c4442f" stroke-width="0.4"/><path d="M4.4 9.6 L6.6 11.5 L3.6 12.5 Z" fill="#7a6a50"/><path d="M4.0 11.4 L4.9 12.1 L3.6 12.5 Z" fill="#222"/></g></svg>
<div class="t" style="left:35.4px;top:414.6px;font-size:11px;color:#000;letter-spacing:-0.049px">Dynamic text 477</div>
<svg class="pi" style="left:17px;top:430.2px" width="14" height="15" viewBox="0 0 14 15"><rect x="0.5" y="1.5" width="11" height="12.5" fill="#fefefe" stroke="#7d8cb0"/><path d="M2.5 6.8H6" stroke="#c3cde2" stroke-width="1"/><rect x="2.5" y="8.8" width="7" height="3.7" fill="#cbd5e9" stroke="#a9b5d0" stroke-width="1"/><g transform="translate(-0.6,0.7)"><path d="M4.4 9.6 L10.1 3.1 L12.3 5.0 L6.6 11.5 Z" fill="#6ed65c" stroke="#45a541" stroke-width="0.7"/><path d="M5.6 10.4 L11.1 4.2" stroke="#a9f098" stroke-width="0.9"/><path d="M10.1 3.1 L11.3 1.7 Q12.6 1.0 13.4 2.2 Q14 3.4 13.4 3.9 L12.3 5.0 Z" fill="#db5a44" stroke="#c4442f" stroke-width="0.4"/><path d="M4.4 9.6 L6.6 11.5 L3.6 12.5 Z" fill="#7a6a50"/><path d="M4.0 11.4 L4.9 12.1 L3.6 12.5 Z" fill="#222"/></g></svg>
<div class="t" style="left:35.4px;top:430.6px;font-size:11px;color:#000;letter-spacing:-0.049px">Dynamic text 478</div>
<svg class="pi" style="left:17px;top:446.2px" width="14" height="15" viewBox="0 0 14 15"><rect x="0.5" y="1.5" width="11" height="12.5" fill="#fefefe" stroke="#7d8cb0"/><path d="M2.5 6.8H6" stroke="#c3cde2" stroke-width="1"/><rect x="2.5" y="8.8" width="7" height="3.7" fill="#cbd5e9" stroke="#a9b5d0" stroke-width="1"/><g transform="translate(-0.6,0.7)"><path d="M4.4 9.6 L10.1 3.1 L12.3 5.0 L6.6 11.5 Z" fill="#6ed65c" stroke="#45a541" stroke-width="0.7"/><path d="M5.6 10.4 L11.1 4.2" stroke="#a9f098" stroke-width="0.9"/><path d="M10.1 3.1 L11.3 1.7 Q12.6 1.0 13.4 2.2 Q14 3.4 13.4 3.9 L12.3 5.0 Z" fill="#db5a44" stroke="#c4442f" stroke-width="0.4"/><path d="M4.4 9.6 L6.6 11.5 L3.6 12.5 Z" fill="#7a6a50"/><path d="M4.0 11.4 L4.9 12.1 L3.6 12.5 Z" fill="#222"/></g></svg>
<div class="t" style="left:35.4px;top:446.6px;font-size:11px;color:#000;letter-spacing:-0.049px">Dynamic text 479</div>
<svg class="pi" style="left:17px;top:462.2px" width="14" height="15" viewBox="0 0 14 15"><rect x="0.5" y="1.5" width="11" height="12.5" fill="#fefefe" stroke="#7d8cb0"/><path d="M2.5 6.8H6" stroke="#c3cde2" stroke-width="1"/><rect x="2.5" y="8.8" width="7" height="3.7" fill="#cbd5e9" stroke="#a9b5d0" stroke-width="1"/><g transform="translate(-0.6,0.7)"><path d="M4.4 9.6 L10.1 3.1 L12.3 5.0 L6.6 11.5 Z" fill="#6ed65c" stroke="#45a541" stroke-width="0.7"/><path d="M5.6 10.4 L11.1 4.2" stroke="#a9f098" stroke-width="0.9"/><path d="M10.1 3.1 L11.3 1.7 Q12.6 1.0 13.4 2.2 Q14 3.4 13.4 3.9 L12.3 5.0 Z" fill="#db5a44" stroke="#c4442f" stroke-width="0.4"/><path d="M4.4 9.6 L6.6 11.5 L3.6 12.5 Z" fill="#7a6a50"/><path d="M4.0 11.4 L4.9 12.1 L3.6 12.5 Z" fill="#222"/></g></svg>
<div class="t" style="left:35.4px;top:462.6px;font-size:11px;color:#000;letter-spacing:-0.049px">Dynamic text 480</div>
<div class="a" style="left:225px;top:174px;width:18px;height:311px;background:#f0f0f0"></div>
<div class="a" style="left:229px;top:179px;width:0;height:0;border-left:4px solid transparent;border-right:4px solid transparent;border-bottom:4px solid #000"></div>
<div class="a" style="left:229px;top:475px;width:0;height:0;border-left:4px solid transparent;border-right:4px solid transparent;border-top:4px solid #000"></div>
<div class="a" style="left:226px;top:389.5px;width:15px;height:77px;border:1px solid #a3a3a3;border-radius:2px;background:linear-gradient(90deg,#f4f4f4,#e2e2e2 50%,#cfcfcf)"></div>
<div class="a" style="left:230px;top:424.5px;width:8px;height:1px;background:#5a5a5a;box-shadow:0 1px 0 #fafafa"></div>
<div class="a" style="left:230px;top:426.5px;width:8px;height:1px;background:#5a5a5a;box-shadow:0 1px 0 #fafafa"></div>
<div class="a" style="left:230px;top:428.5px;width:8px;height:1px;background:#5a5a5a;box-shadow:0 1px 0 #fafafa"></div>
<div class="a" style="left:10px;top:495px;width:234px;height:219px;border:1px solid #8db2e3;background:#c5daf7"></div>
<div class="a" style="left:11px;top:496px;width:232px;height:18px;background:linear-gradient(#dce9fb,#c3d8f5);border-bottom:1px solid #a9c6ee"></div>
<div class="t" style="left:13.4px;top:499.0px;font-size:11.3px;color:#15428b;letter-spacing:-0.276px;font-weight:bold;-webkit-text-stroke:0">Edit texts</div>
<div class="a" style="left:230px;top:502px;width:0;height:0;border-left:3.5px solid transparent;border-right:3.5px solid transparent;border-top:4px solid #8fb0e0"></div>
<div class="a" style="left:11px;top:515px;width:232px;height:22px;background:linear-gradient(#dde9fb 0,#d2e2f8 45%,#c6daf5 55%,#c9dcf6 100%)"></div>
<div class="a" style="left:11px;top:537px;width:232px;height:25px;background:linear-gradient(#dde9fb 0,#d2e2f8 45%,#c6daf5 55%,#c9dcf6 100%);border-top:1px solid #b4cdf0"></div>
<div class="a" style="left:20px;top:515px;width:21.5px;height:20.5px;border:1px solid #bfa07a;border-radius:3px;background:linear-gradient(#f3c08a,#f8cc98 30%,#f6b96c 55%,#fad493 80%,#fde9b8);box-shadow:inset 0 0 0 1px rgba(255,240,212,.6)"></div>
<div class="a" style="left:25px;top:519px;width:12.5px;height:13.5px;background:#fefefe;border-radius:1px;box-shadow:0 0 0 .6px #e3d9c9"></div>
<div class="a" style="left:26.5px;top:521.0px;width:9px;height:1px;background:#eab072"></div>
<div class="a" style="left:26.5px;top:523.2px;width:9px;height:1px;background:#eab072"></div>
<div class="a" style="left:26.5px;top:525.4px;width:9px;height:1px;background:#eab072"></div>
<div class="a" style="left:26.5px;top:527.6px;width:5px;height:1px;background:#eab072"></div>
<div class="a" style="left:26.5px;top:529.8px;width:5px;height:1px;background:#eab072"></div>
<svg class="a" style="left:30.5px;top:525px" width="8" height="8" viewBox="0 0 8 8"><path d="M6.5 0.5V4.5H2.5" stroke="#0f6f86" stroke-width="1.6" fill="none"/><path d="M0 4.5L3.4 1.8V7.2Z" fill="#0f6f86"/></svg>
<div class="a" style="left:42.5px;top:515px;width:21.5px;height:20.5px;border:1px solid #bfa07a;border-radius:3px;background:linear-gradient(#f3c08a,#f8cc98 30%,#f6b96c 55%,#fad493 80%,#fde9b8);box-shadow:inset 0 0 0 1px rgba(255,240,212,.6)"></div>
<div class="a" style="left:47px;top:519px;width:12.5px;height:13.5px;background:#fefefe;border-radius:1px;box-shadow:0 0 0 .6px #e3d9c9"></div>
<svg class="a" style="left:49px;top:520.5px" width="9" height="5" viewBox="0 0 9 5"><path d="M0 0H9L4.5 4.6Z" fill="#e9a45c"/></svg>
<div class="a" style="left:48.5px;top:526.5px;width:9.5px;height:1px;background:#eab072"></div>
<div class="a" style="left:48.5px;top:529px;width:9.5px;height:1px;background:#eab072"></div>
<div class="a" style="left:48.5px;top:529px;width:9.5px;height:0;border-top:1px dashed #eab072"></div>
<div class="a" style="left:68px;top:523px;width:11px;height:7.5px;background:#eaf2fd"></div>
<div class="a" style="left:69px;top:524.5px;width:4px;height:4px;border-radius:50%;background:#c3d7f3"></div>
<div class="a" style="left:74px;top:524.5px;width:4px;height:4px;border-radius:50%;background:#c3d7f3"></div>
<svg class="a" style="left:78.5px;top:522.5px" width="5" height="8" viewBox="0 0 5 8"><path d="M0.3 0.6H4.7M2.5 0.6V7.4M0.3 7.4H4.7" stroke="#0f6f86" stroke-width="1.3" fill="none"/></svg>
<div class="a" style="left:86px;top:515px;width:21.5px;height:20.5px;border:1px solid #bfa07a;border-radius:3px;background:linear-gradient(#f3c08a,#f8cc98 30%,#f6b96c 55%,#fad493 80%,#fde9b8);box-shadow:inset 0 0 0 1px rgba(255,240,212,.6)"></div>
<div class="a" style="left:90.5px;top:519px;width:12.5px;height:13.5px;background:#fefefe;border-radius:1px;box-shadow:0 0 0 .6px #e3d9c9"></div>
<div class="a" style="left:92px;top:521.0px;width:9px;height:1px;background:#eab072"></div>
<div class="a" style="left:92px;top:523.3px;width:9px;height:1px;background:#eab072"></div>
<div class="a" style="left:92px;top:525.6px;width:6px;height:1px;background:#eab072"></div>
<div class="a" style="left:92px;top:527.9px;width:6px;height:1px;background:#eab072"></div>
<div class="a" style="left:97.8px;top:524px;width:4.6px;height:5px;border:1.2px solid #cfc21a;border-bottom:none;border-radius:2.5px 2.5px 0 0"></div>
<div class="a" style="left:96.5px;top:527.3px;width:7.5px;height:5.8px;background:#f1ea18;border:.6px solid #b9ad10;border-radius:1px"></div>
<div class="a" style="left:113px;top:519px;width:12px;height:13px;background:#fefefe;border-radius:1px;box-shadow:0 0 0 .6px #d8e2f2"></div>
<div class="a" style="left:115px;top:521.5px;width:6.5px;height:6.5px;border:1px solid #6ab0bd;background:#f3fafb"></div>
<div class="a" style="left:116.6px;top:523.3px;width:3.6px;height:1.2px;background:#0f6f86"></div>
<div class="a" style="left:117.8px;top:523.3px;width:1.2px;height:3.6px;background:#0f6f86"></div>
<div class="a" style="left:120.5px;top:527px;width:3.5px;height:3.5px;border:1px solid #c9d6ea;border-radius:50%"></div>
<div class="a" style="left:135px;top:519px;width:12.5px;height:13px;background:#fefefe;box-shadow:0 0 0 .6px #d8e2f2"></div>
<div class="t" style="left:135.4px;top:518.4px;font-size:10px;font-weight:bold;color:#118493;line-height:14px;font-family:'Liberation Mono',monospace">A</div>
<div class="a" style="left:141.3px;top:520.5px;width:6px;height:10px;border:1.3px solid #118493"></div>
<div class="a" style="left:143px;top:524.6px;width:2.6px;height:4.3px;border:1.1px solid #118493"></div>
<div class="t" style="left:156.8px;top:516.6px;font-size:8px;font-weight:bold;color:#118493;font-family:'Liberation Mono',monospace;line-height:10px;letter-spacing:-0.75px">&lt;/&gt;</div>
<div class="t" style="left:154.6px;top:524.6px;font-size:8.2px;font-weight:bold;color:#118493;font-family:'Liberation Mono',monospace;line-height:10px;letter-spacing:-0.8px">HTML</div>
<div class="t" style="left:179.2px;top:517.2px;font-size:10.5px;font-weight:bold;color:#118493;line-height:14px;font-family:'Liberation Mono',monospace">A</div>
<svg class="a" style="left:178px;top:517px" width="18" height="17" viewBox="0 0 18 17"><path d="M8.6 4.6 L14.6 4.2 L13.2 14.2 L8.2 13.4 Z" fill="#f4ec2a" stroke="#c2b61a" stroke-width=".6"/><path d="M10 6.5 L13 6.2 L12.4 10.4 L9.7 10Z" fill="#fbf8b8"/><path d="M8.4 1.2 L11.6 3.4 L10.4 5 L7.6 3.2Z" fill="#d8392a"/><path d="M12.4 2.8 L15.6 3.6" stroke="#8a8f2a" stroke-width="1"/><path d="M1.8 12.6 L5.4 11.4 L8.2 13.4 L4.2 14.8Z" fill="#2a86c8"/></svg>
<div class="a" style="left:23.2px;top:543.4px;width:13.5px;height:13px;background:#fefefe;border:1px solid #c3d0e6;border-radius:2px"></div>
<div class="a" style="left:26.2px;top:546.0px;width:7.5px;height:1px;background:#7f8ba6"></div>
<div class="a" style="left:26.2px;top:548.2px;width:5px;height:1px;background:#7f8ba6"></div>
<div class="a" style="left:26.2px;top:550.4px;width:7.5px;height:1px;background:#7f8ba6"></div>
<div class="a" style="left:26.2px;top:552.6px;width:5px;height:1px;background:#7f8ba6"></div>
<div class="a" style="left:45.2px;top:543.4px;width:13.5px;height:13px;background:#fefefe;border:1px solid #c3d0e6;border-radius:2px"></div>
<div class="a" style="left:48.2px;top:546.0px;width:7.5px;height:1px;background:#7f8ba6"></div>
<div class="a" style="left:49.7px;top:548.2px;width:4.5px;height:1px;background:#7f8ba6"></div>
<div class="a" style="left:48.2px;top:550.4px;width:7.5px;height:1px;background:#7f8ba6"></div>
<div class="a" style="left:49.7px;top:552.6px;width:4.5px;height:1px;background:#7f8ba6"></div>
<div class="a" style="left:67.3px;top:543.4px;width:13.5px;height:13px;background:#fefefe;border:1px solid #c3d0e6;border-radius:2px"></div>
<div class="a" style="left:70.3px;top:546.0px;width:7.5px;height:1px;background:#7f8ba6"></div>
<div class="a" style="left:72.8px;top:548.2px;width:5px;height:1px;background:#7f8ba6"></div>
<div class="a" style="left:70.3px;top:550.4px;width:7.5px;height:1px;background:#7f8ba6"></div>
<div class="a" style="left:72.8px;top:552.6px;width:5px;height:1px;background:#7f8ba6"></div>
<div class="a" style="left:86px;top:539.8px;width:21.5px;height:19.8px;border:1px solid #bfa07a;border-radius:3px;background:linear-gradient(#f3c08a,#f8cc98 30%,#f6b96c 55%,#fad493 80%,#fde9b8);box-shadow:inset 0 0 0 1px rgba(255,240,212,.6)"></div>
<div class="a" style="left:89.6px;top:543px;width:13.5px;height:13px;background:#fefefe;border:1px solid #c3d0e6;border-radius:2px"></div>
<div class="a" style="left:92.6px;top:545.6px;width:7.5px;height:1px;background:#7f8ba6"></div>
<div class="a" style="left:92.6px;top:547.8000000000001px;width:7.5px;height:1px;background:#7f8ba6"></div>
<div class="a" style="left:92.6px;top:550.0px;width:7.5px;height:1px;background:#7f8ba6"></div>
<div class="a" style="left:92.6px;top:552.2px;width:7.5px;height:1px;background:#7f8ba6"></div>
<div class="a" style="left:111.5px;top:543px;width:1px;height:14px;background:#9db6dc;box-shadow:1px 0 0 #e6effb"></div>
<div class="a" style="left:117px;top:539.5px;width:21px;height:22px;border:1px solid #d8c79c;border-right:none;border-bottom:none;border-radius:3px 0 0 0;background:linear-gradient(#fdf3dc,#fce4b0 40%,#f9c466 62%,#fbd58a 100%)"></div>
<div class="t" style="left:123.6px;top:539.4px;font-size:13.5px;font-weight:bold;color:#0f4a5c;font-family:'Liberation Serif',serif;line-height:16px">T</div>
<div class="a" style="left:121px;top:553.3px;width:13.5px;height:3.6px;background:#c6f26c"></div>
<div class="a" style="left:137.4px;top:538px;width:15.4px;height:24.6px;border:2px solid #c9152b;background:linear-gradient(#fdf0d4,#fbdc9e 40%,#f9c060 62%,#fbd58a 100%)"></div>
<div class="a" style="left:142.8px;top:547.8px;width:0;height:0;border-left:2.8px solid transparent;border-right:2.8px solid transparent;border-top:3px solid #5a78a8"></div>
<div class="a" style="left:12px;top:562px;width:230px;height:87px;background:#fff"></div>
<div class="a" style="left:226.5px;top:562px;width:15.5px;height:87px;background:#f0f0f0"></div>
<div class="a" style="left:12px;top:562px;width:213.5px;height:16px;overflow:hidden">
<div class="t" style="left:2px;top:0.0px;font-size:11px;color:#000;letter-spacing:-0.078px">1 2 3 4 5 6 7 8 9 0</div>
<div class="t" style="left:95.5px;top:0.0px;font-size:11px;color:#000;letter-spacing:0.000px">aaaaaaaaaaaaaaaaaaaaaaaaaaaaaa</div>
</div>
<div class="a" style="left:231px;top:567px;width:0;height:0;border-left:4px solid transparent;border-right:4px solid transparent;border-bottom:4px solid #b0b0b0"></div>
<div class="a" style="left:231px;top:638px;width:0;height:0;border-left:4px solid transparent;border-right:4px solid transparent;border-top:4px solid #b0b0b0"></div>
<div class="a" style="left:12px;top:649px;width:230px;height:16px;background:#f0f0f0"></div>
<div class="a" style="left:17px;top:653px;width:0;height:0;border-top:4px solid transparent;border-bottom:4px solid transparent;border-right:4px solid #000"></div>
<div class="a" style="left:215px;top:653px;width:0;height:0;border-top:4px solid transparent;border-bottom:4px solid transparent;border-left:4px solid #000"></div>
<div class="a" style="left:29px;top:650px;width:15px;height:14px;border:1px solid #a3a3a3;border-radius:2px;background:linear-gradient(#f4f4f4,#e2e2e2 50%,#cfcfcf)"></div>
<div class="a" style="left:117px;top:560px;width:96px;height:101px;background:#fafafa;border:1px solid #868fa8;box-shadow:1px 1px 2px rgba(0,0,0,.25)"></div>
<div class="sw" style="left:124px;top:567px;background:#000000"></div>
<div class="sw" style="left:141px;top:567px;background:#800000"></div>
<div class="sw" style="left:158px;top:567px;background:#008000"></div>
<div class="sw" style="left:175px;top:567px;background:#808000"></div>
<div class="sw" style="left:192px;top:567px;background:#000080"></div>
<div class="sw" style="left:124px;top:583px;background:#800080"></div>
<div class="sw" style="left:141px;top:583px;background:#008080"></div>
<div class="sw" style="left:158px;top:583px;background:#c0c0c0"></div>
<div class="sw" style="left:175px;top:583px;background:#c0dcc0"></div>
<div class="sw" style="left:192px;top:583px;background:#a6caf0"></div>
<div class="sw" style="left:124px;top:599px;background:#fffbf0"></div>
<div class="sw" style="left:141px;top:599px;background:#a0a0a4"></div>
<div class="sw" style="left:158px;top:599px;background:#808080"></div>
<div class="sw" style="left:175px;top:599px;background:#ff0000"></div>
<div class="sw" style="left:192px;top:599px;background:#00ff00"></div>
<div class="sw" style="left:124px;top:615px;background:#ffff00"></div>
<div class="sw" style="left:141px;top:615px;background:#0000ff"></div>
<div class="sw" style="left:158px;top:615px;background:#ff00ff"></div>
<div class="sw" style="left:175px;top:615px;background:#00ffff"></div>
<div class="sw" style="left:192px;top:615px;background:#ffffff"></div>
<div class="a" style="left:122px;top:633px;width:85px;height:1px;background:#c5c5c5"></div>
<div class="a" style="left:112px;top:637px;width:104px;height:25px;border:2px solid #c81c24"></div>
<div class="t" style="left:124px;top:641.1px;font-size:11.5px;color:#15428b;letter-spacing:-0.089px">Custom co...</div>
<div class="a" style="left:190px;top:641px;width:17px;height:15px;border:1px solid #f0a040;border-radius:2px;background:#fbd58c;"></div>
<div class="a" style="left:193px;top:644px;width:11px;height:9px;background:#c8ff64"></div>
<div class="t" style="left:26px;top:672.4px;font-size:11px;color:#000;letter-spacing:-0.703px">X:</div>
<div class="a" style="left:47px;top:673px;width:65px;height:14px;background:#fff"></div>
<div class="t" style="left:50px;top:672.4px;font-size:11px;color:#000;letter-spacing:-0.125px">0</div>
<div class="a" style="left:98px;top:674px;width:13px;height:4.8px;background:#dbe5f3"></div>
<div class="a" style="left:98px;top:681px;width:13px;height:4.8px;background:#dbe5f3"></div>
<div class="a" style="left:101.5px;top:675px;width:0;height:0;border-left:3px solid transparent;border-right:3px solid transparent;border-bottom:3px solid #5a78a8"></div>
<div class="a" style="left:101.5px;top:682px;width:0;height:0;border-left:3px solid transparent;border-right:3px solid transparent;border-top:3px solid #5a78a8"></div>
<div class="t" style="left:26px;top:693.4px;font-size:11px;color:#000;letter-spacing:-0.648px">Y:</div>
<div class="a" style="left:47px;top:694px;width:65px;height:14px;background:#fff"></div>
<div class="t" style="left:50px;top:693.4px;font-size:11px;color:#000;letter-spacing:-0.125px">0</div>
<div class="a" style="left:98px;top:695px;width:13px;height:4.8px;background:#dbe5f3"></div>
<div class="a" style="left:98px;top:702px;width:13px;height:4.8px;background:#dbe5f3"></div>
<div class="a" style="left:101.5px;top:696px;width:0;height:0;border-left:3px solid transparent;border-right:3px solid transparent;border-bottom:3px solid #5a78a8"></div>
<div class="a" style="left:101.5px;top:703px;width:0;height:0;border-left:3px solid transparent;border-right:3px solid transparent;border-top:3px solid #5a78a8"></div>
<div class="t" style="left:142px;top:672.4px;font-size:11px;color:#000;letter-spacing:0.125px">W:</div>
<div class="a" style="left:163px;top:673px;width:65px;height:14px;background:#fff"></div>
<div class="t" style="left:166px;top:672.4px;font-size:11px;color:#000;letter-spacing:-0.206px">3 980</div>
<div class="a" style="left:214px;top:674px;width:13px;height:4.8px;background:#dbe5f3"></div>
<div class="a" style="left:214px;top:681px;width:13px;height:4.8px;background:#dbe5f3"></div>
<div class="a" style="left:217.5px;top:675px;width:0;height:0;border-left:3px solid transparent;border-right:3px solid transparent;border-bottom:3px solid #5a78a8"></div>
<div class="a" style="left:217.5px;top:682px;width:0;height:0;border-left:3px solid transparent;border-right:3px solid transparent;border-top:3px solid #5a78a8"></div>
<div class="t" style="left:142.5px;top:693.4px;font-size:11px;color:#000;letter-spacing:-0.500px">H:</div>
<div class="a" style="left:163px;top:694px;width:65px;height:14px;background:#fff"></div>
<div class="t" style="left:166px;top:693.4px;font-size:11px;color:#000;letter-spacing:-0.206px">3 328</div>
<div class="a" style="left:214px;top:695px;width:13px;height:4.8px;background:#dbe5f3"></div>
<div class="a" style="left:214px;top:702px;width:13px;height:4.8px;background:#dbe5f3"></div>
<div class="a" style="left:217.5px;top:696px;width:0;height:0;border-left:3px solid transparent;border-right:3px solid transparent;border-bottom:3px solid #5a78a8"></div>
<div class="a" style="left:217.5px;top:703px;width:0;height:0;border-left:3px solid transparent;border-right:3px solid transparent;border-top:3px solid #5a78a8"></div>
<div class="a" style="left:717.3px;top:143px;width:3.7px;height:579px;background:#d2e3fb"></div>
<div class="a" style="left:251px;top:145px;width:1.6px;height:374px;background:#d2e3fb"></div>
<div class="a" style="left:253px;top:145px;width:464px;height:19px;background:#b8ceee"></div>
<svg class="pi" style="left:258px;top:146.3px" width="14" height="15" viewBox="0 0 14 15"><rect x="0.5" y="1.5" width="11" height="12.5" fill="#fefefe" stroke="#7d8cb0"/><path d="M2.5 6.8H6" stroke="#c3cde2" stroke-width="1"/><rect x="2.5" y="8.8" width="7" height="3.7" fill="#cbd5e9" stroke="#a9b5d0" stroke-width="1"/><g transform="translate(-0.6,0.7)"><path d="M4.4 9.6 L10.1 3.1 L12.3 5.0 L6.6 11.5 Z" fill="#6ed65c" stroke="#45a541" stroke-width="0.7"/><path d="M5.6 10.4 L11.1 4.2" stroke="#a9f098" stroke-width="0.9"/><path d="M10.1 3.1 L11.3 1.7 Q12.6 1.0 13.4 2.2 Q14 3.4 13.4 3.9 L12.3 5.0 Z" fill="#db5a44" stroke="#c4442f" stroke-width="0.4"/><path d="M4.4 9.6 L6.6 11.5 L3.6 12.5 Z" fill="#7a6a50"/><path d="M4.0 11.4 L4.9 12.1 L3.6 12.5 Z" fill="#222"/></g></svg>
<div class="t" style="left:276.3px;top:147.1px;font-size:11.3px;color:#24509a;letter-spacing:-0.068px">battle.swf :: Texts (66) :: Dynamic text 470</div>
<div class="a" style="left:252px;top:164px;width:465px;height:355px;background:#666666"></div>
<div class="a" style="left:252.5px;top:524px;width:464.5px;height:19.5px;background:#b8ceee"></div>
<div class="t" style="left:255.8px;top:525.6px;font-size:11.3px;color:#24509a;letter-spacing:0.101px">Tag information - Dynamic text 470</div>
<svg class="a" style="left:703.5px;top:528.5px" width="7" height="8" viewBox="0 0 7 8"><path d="M1 0.5H5.8M1.5 0.5V5.5M4.9 0.5V5.5M0 5.6H7M3.5 5.6V8" stroke="#4a6aa2" stroke-width="1" fill="none"/><path d="M4 0.5H5.8V5.5H4Z" fill="#4a6aa2"/></svg>
<div class="a" style="left:254px;top:545px;width:461.5px;height:156px;background:#fff;border-bottom:1px solid #5b8fd0"></div>
<div class="a" style="left:255px;top:546px;width:443px;height:19px;background:linear-gradient(#ffffff,#e6eefb 60%,#d3e1f5);border-bottom:1px solid #b9c9e0"></div>
<div class="a" style="left:342px;top:546px;width:1px;height:138px;background:#d0d8e4"></div>
<div class="t" style="left:260.3px;top:548.8px;font-size:11px;color:#000;letter-spacing:0.115px">Property</div>
<div class="t" style="left:348.2px;top:548.8px;font-size:11px;color:#000;letter-spacing:0.254px">Value</div>
<div class="a" style="left:0;top:565px;width:698px;height:119px;overflow:hidden">
<div class="t" style="left:260.7px;top:0.6px;font-size:11px;color:#000;letter-spacing:-0.050px">Tag</div>
<div class="t" style="left:348.4px;top:0.6px;font-size:11px;color:#000;letter-spacing:0.029px">37 (stagDefineEditText)</div>
<div class="a" style="left:255px;top:14px;width:443px;height:1px;background:#ececec"></div>
<div class="t" style="left:260.7px;top:14.6px;font-size:11px;color:#000;letter-spacing:0.206px">Id</div>
<div class="t" style="left:348.4px;top:14.6px;font-size:11px;color:#000;letter-spacing:-0.153px">470</div>
<div class="a" style="left:255px;top:28px;width:443px;height:1px;background:#ececec"></div>
<div class="t" style="left:260.7px;top:28.6px;font-size:11px;color:#000;letter-spacing:-0.213px">Size in bytes</div>
<div class="t" style="left:348.4px;top:28.6px;font-size:11px;color:#000;letter-spacing:-0.153px">403</div>
<div class="a" style="left:255px;top:42px;width:443px;height:1px;background:#ececec"></div>
<div class="t" style="left:260.7px;top:42.6px;font-size:11px;color:#000;letter-spacing:-0.452px">Bounds</div>
<div class="t" style="left:348.4px;top:42.6px;font-size:11px;color:#000;letter-spacing:0.124px">(-40, -40) : (3940, 3288)</div>
<div class="a" style="left:255px;top:56px;width:443px;height:1px;background:#ececec"></div>
<div class="t" style="left:260.7px;top:56.6px;font-size:11px;color:#000;letter-spacing:0.278px">Text</div>
<div class="t" style="left:349px;top:56.6px;font-size:11px;color:#000;letter-spacing:-0.126px">1 2 3 4 5 6 7 8 9 0</div>
<div class="t" style="left:441.8px;top:56.6px;font-size:11px;color:#000;letter-spacing:0.000px;letter-spacing:-0.05px">aaaaaaaaaaaaaaaaaaaaaaaaaaaaaaaaaaaaaaaaaaaaaaaaaaaaaaaaaaaa</div>
<div class="a" style="left:255px;top:70px;width:443px;height:1px;background:#ececec"></div>
<div class="t" style="left:260.7px;top:70.6px;font-size:11px;color:#000;letter-spacing:-0.143px">Has wordwrap</div>
<div class="t" style="left:348.4px;top:70.6px;font-size:11px;color:#000;letter-spacing:-0.284px">Yes</div>
<div class="a" style="left:255px;top:84px;width:443px;height:1px;background:#ececec"></div>
<div class="t" style="left:260.7px;top:84.6px;font-size:11px;color:#000;letter-spacing:-0.231px">Is multiline</div>
<div class="t" style="left:348.4px;top:84.6px;font-size:11px;color:#000;letter-spacing:-0.284px">Yes</div>
<div class="a" style="left:255px;top:98px;width:443px;height:1px;background:#ececec"></div>
<div class="t" style="left:260.7px;top:98.6px;font-size:11px;color:#000;letter-spacing:-0.082px">Is password</div>
<div class="t" style="left:348.4px;top:98.6px;font-size:11px;color:#000;letter-spacing:-0.631px">No</div>
<div class="a" style="left:255px;top:112px;width:443px;height:1px;background:#ececec"></div>
<div class="t" style="left:260.7px;top:112.6px;font-size:11px;color:#000;letter-spacing:0.077px">Is read only</div>
<div class="t" style="left:348.4px;top:112.6px;font-size:11px;color:#000;letter-spacing:-0.284px">Yes</div>
<div class="a" style="left:255px;top:126px;width:443px;height:1px;background:#ececec"></div>
</div>
<div class="a" style="left:698px;top:546px;width:17px;height:138px;background:#f0f0f0"></div>
<div class="a" style="left:702px;top:552px;width:0;height:0;border-left:4px solid transparent;border-right:4px solid transparent;border-bottom:4px solid #000"></div>
<div class="a" style="left:702px;top:674px;width:0;height:0;border-left:4px solid transparent;border-right:4px solid transparent;border-top:4px solid #000"></div>
<div class="a" style="left:699px;top:564px;width:14px;height:38px;border:1px solid #a3a3a3;border-radius:2px;background:linear-gradient(90deg,#f4f4f4,#e2e2e2 50%,#cfcfcf)"></div>
<div class="a" style="left:703px;top:580px;width:7px;height:1px;background:#5a5a5a;box-shadow:0 1px 0 #fafafa"></div>
<div class="a" style="left:703px;top:582px;width:7px;height:1px;background:#5a5a5a;box-shadow:0 1px 0 #fafafa"></div>
<div class="a" style="left:703px;top:584px;width:7px;height:1px;background:#5a5a5a;box-shadow:0 1px 0 #fafafa"></div>
<div class="a" style="left:255px;top:684px;width:460px;height:17px;background:#f0f0f0"></div>
<div class="a" style="left:259px;top:688px;width:0;height:0;border-top:4px solid transparent;border-bottom:4px solid transparent;border-right:4px solid #000"></div>
<div class="a" style="left:687px;top:688px;width:0;height:0;border-top:4px solid transparent;border-bottom:4px solid transparent;border-left:4px solid #000"></div>
<div class="a" style="left:273px;top:685px;width:108px;height:15px;border:1px solid #a3a3a3;border-radius:2px;background:linear-gradient(#f4f4f4,#e2e2e2 50%,#cfcfcf)"></div>
<div class="a" style="left:324px;top:689px;width:1px;height:7px;background:#555"></div>
<div class="a" style="left:326px;top:689px;width:1px;height:7px;background:#555"></div>
<div class="a" style="left:328px;top:689px;width:1px;height:7px;background:#555"></div>
<div class="a" style="left:256px;top:702px;width:36px;height:18px;background:linear-gradient(#ffffff,#e4eefb);border:1px solid #9fbfe8;border-top:none;border-radius:0 0 4px 4px"></div>
<div class="t" style="left:262.4px;top:704.1px;font-size:11.3px;color:#15428b;letter-spacing:0.589px">Info</div>
<div class="t" style="left:303.4px;top:704.1px;font-size:11.3px;color:#15428b;letter-spacing:-0.093px">Used by</div>
<div class="a" style="left:721px;top:145px;width:239px;height:19px;background:#b8ceee"></div>
<div class="t" style="left:725.3px;top:147.1px;font-size:11.3px;color:#24509a;letter-spacing:-0.357px">My tasks (SWF, EXE) - 35</div>
<svg class="a" style="left:948px;top:150px" width="7" height="8" viewBox="0 0 7 8"><path d="M1 0.5H5.8M1.5 0.5V5.5M4.9 0.5V5.5M0 5.6H7M3.5 5.6V8" stroke="#4a6aa2" stroke-width="1" fill="none"/><path d="M4 0.5H5.8V5.5H4Z" fill="#4a6aa2"/></svg>
<div class="a" style="left:721px;top:164px;width:240px;height:558px;background:#fff;border-left:1px solid #8b9bb6;border-right:1px solid #9aa5b8;border-top:1px solid #7f8da6;overflow:hidden">
<div class="a" style="left:30px;top:0;width:0;height:558px;border-left:1px dotted #9a9a9a"></div>
<div class="a" style="left:49px;top:0;width:0;height:558px;border-left:1px dotted #9a9a9a"></div>
</div>
<div class="a" style="left:0;top:164px;width:960px;height:558px;overflow:hidden">
<div class="hd" style="top:9px"></div>
<div class="cb" style="top:4px"></div>
<svg class="pi" style="left:796px;top:1.0999999999999996px" width="14" height="15" viewBox="0 0 14 15"><rect x="0.5" y="1.5" width="11" height="12.5" fill="#fefefe" stroke="#7d8cb0"/><path d="M2.5 6.8H6" stroke="#c3cde2" stroke-width="1"/><rect x="2.5" y="8.8" width="7" height="3.7" fill="#cbd5e9" stroke="#a9b5d0" stroke-width="1"/><g transform="translate(-0.6,0.7)"><path d="M4.4 9.6 L10.1 3.1 L12.3 5.0 L6.6 11.5 Z" fill="#6ed65c" stroke="#45a541" stroke-width="0.7"/><path d="M5.6 10.4 L11.1 4.2" stroke="#a9f098" stroke-width="0.9"/><path d="M10.1 3.1 L11.3 1.7 Q12.6 1.0 13.4 2.2 Q14 3.4 13.4 3.9 L12.3 5.0 Z" fill="#db5a44" stroke="#c4442f" stroke-width="0.4"/><path d="M4.4 9.6 L6.6 11.5 L3.6 12.5 Z" fill="#7a6a50"/><path d="M4.0 11.4 L4.9 12.1 L3.6 12.5 Z" fill="#222"/></g></svg>
<div class="t" style="left:814.5px;top:1.6px;font-size:11px;color:#000;letter-spacing:0.000px;letter-spacing:-0.06px">Dynamic text 75</div>
<div class="hd" style="top:25px"></div>
<div class="cb" style="top:20px"></div>
<svg class="pi" style="left:796px;top:17.1px" width="14" height="15" viewBox="0 0 14 15"><rect x="0.5" y="1.5" width="11" height="12.5" fill="#fefefe" stroke="#7d8cb0"/><path d="M2.5 6.8H6" stroke="#c3cde2" stroke-width="1"/><rect x="2.5" y="8.8" width="7" height="3.7" fill="#cbd5e9" stroke="#a9b5d0" stroke-width="1"/><g transform="translate(-0.6,0.7)"><path d="M4.4 9.6 L10.1 3.1 L12.3 5.0 L6.6 11.5 Z" fill="#6ed65c" stroke="#45a541" stroke-width="0.7"/><path d="M5.6 10.4 L11.1 4.2" stroke="#a9f098" stroke-width="0.9"/><path d="M10.1 3.1 L11.3 1.7 Q12.6 1.0 13.4 2.2 Q14 3.4 13.4 3.9 L12.3 5.0 Z" fill="#db5a44" stroke="#c4442f" stroke-width="0.4"/><path d="M4.4 9.6 L6.6 11.5 L3.6 12.5 Z" fill="#7a6a50"/><path d="M4.0 11.4 L4.9 12.1 L3.6 12.5 Z" fill="#222"/></g></svg>
<div class="t" style="left:814.5px;top:17.6px;font-size:11px;color:#000;letter-spacing:0.000px;letter-spacing:-0.06px">Dynamic text 76</div>
<div class="hd" style="top:41px"></div>
<div class="cb" style="top:36px"></div>
<svg class="pi" style="left:796px;top:33.1px" width="14" height="15" viewBox="0 0 14 15"><rect x="0.5" y="1.5" width="11" height="12.5" fill="#fefefe" stroke="#7d8cb0"/><path d="M2.5 6.8H6" stroke="#c3cde2" stroke-width="1"/><rect x="2.5" y="8.8" width="7" height="3.7" fill="#cbd5e9" stroke="#a9b5d0" stroke-width="1"/><g transform="translate(-0.6,0.7)"><path d="M4.4 9.6 L10.1 3.1 L12.3 5.0 L6.6 11.5 Z" fill="#6ed65c" stroke="#45a541" stroke-width="0.7"/><path d="M5.6 10.4 L11.1 4.2" stroke="#a9f098" stroke-width="0.9"/><path d="M10.1 3.1 L11.3 1.7 Q12.6 1.0 13.4 2.2 Q14 3.4 13.4 3.9 L12.3 5.0 Z" fill="#db5a44" stroke="#c4442f" stroke-width="0.4"/><path d="M4.4 9.6 L6.6 11.5 L3.6 12.5 Z" fill="#7a6a50"/><path d="M4.0 11.4 L4.9 12.1 L3.6 12.5 Z" fill="#222"/></g></svg>
<div class="t" style="left:814.5px;top:33.6px;font-size:11px;color:#000;letter-spacing:0.000px;letter-spacing:-0.06px">Dynamic text 81</div>
<div class="hd" style="top:57px"></div>
<div class="cb" style="top:52px"></div>
<svg class="pi" style="left:796px;top:49.1px" width="14" height="15" viewBox="0 0 14 15"><rect x="0.5" y="1.5" width="11" height="12.5" fill="#fefefe" stroke="#7d8cb0"/><path d="M2.5 6.8H6" stroke="#c3cde2" stroke-width="1"/><rect x="2.5" y="8.8" width="7" height="3.7" fill="#cbd5e9" stroke="#a9b5d0" stroke-width="1"/><g transform="translate(-0.6,0.7)"><path d="M4.4 9.6 L10.1 3.1 L12.3 5.0 L6.6 11.5 Z" fill="#6ed65c" stroke="#45a541" stroke-width="0.7"/><path d="M5.6 10.4 L11.1 4.2" stroke="#a9f098" stroke-width="0.9"/><path d="M10.1 3.1 L11.3 1.7 Q12.6 1.0 13.4 2.2 Q14 3.4 13.4 3.9 L12.3 5.0 Z" fill="#db5a44" stroke="#c4442f" stroke-width="0.4"/><path d="M4.4 9.6 L6.6 11.5 L3.6 12.5 Z" fill="#7a6a50"/><path d="M4.0 11.4 L4.9 12.1 L3.6 12.5 Z" fill="#222"/></g></svg>
<div class="t" style="left:814.5px;top:49.6px;font-size:11px;color:#000;letter-spacing:0.000px;letter-spacing:-0.06px">Dynamic text 85</div>
<div class="hd" style="top:73px"></div>
<div class="cb" style="top:68px"></div>
<svg class="pi" style="left:796px;top:65.1px" width="14" height="15" viewBox="0 0 14 15"><rect x="0.5" y="1.5" width="11" height="12.5" fill="#fefefe" stroke="#7d8cb0"/><path d="M2.5 6.8H6" stroke="#c3cde2" stroke-width="1"/><rect x="2.5" y="8.8" width="7" height="3.7" fill="#cbd5e9" stroke="#a9b5d0" stroke-width="1"/><g transform="translate(-0.6,0.7)"><path d="M4.4 9.6 L10.1 3.1 L12.3 5.0 L6.6 11.5 Z" fill="#6ed65c" stroke="#45a541" stroke-width="0.7"/><path d="M5.6 10.4 L11.1 4.2" stroke="#a9f098" stroke-width="0.9"/><path d="M10.1 3.1 L11.3 1.7 Q12.6 1.0 13.4 2.2 Q14 3.4 13.4 3.9 L12.3 5.0 Z" fill="#db5a44" stroke="#c4442f" stroke-width="0.4"/><path d="M4.4 9.6 L6.6 11.5 L3.6 12.5 Z" fill="#7a6a50"/><path d="M4.0 11.4 L4.9 12.1 L3.6 12.5 Z" fill="#222"/></g></svg>
<div class="t" style="left:814.5px;top:65.6px;font-size:11px;color:#000;letter-spacing:0.000px;letter-spacing:-0.06px">Dynamic text 87</div>
<div class="hd" style="top:89px"></div>
<div class="cb" style="top:84px"></div>
<svg class="pi" style="left:796px;top:81.1px" width="14" height="15" viewBox="0 0 14 15"><rect x="0.5" y="1.5" width="11" height="12.5" fill="#fefefe" stroke="#7d8cb0"/><path d="M2.5 6.8H6" stroke="#c3cde2" stroke-width="1"/><rect x="2.5" y="8.8" width="7" height="3.7" fill="#cbd5e9" stroke="#a9b5d0" stroke-width="1"/><g transform="translate(-0.6,0.7)"><path d="M4.4 9.6 L10.1 3.1 L12.3 5.0 L6.6 11.5 Z" fill="#6ed65c" stroke="#45a541" stroke-width="0.7"/><path d="M5.6 10.4 L11.1 4.2" stroke="#a9f098" stroke-width="0.9"/><path d="M10.1 3.1 L11.3 1.7 Q12.6 1.0 13.4 2.2 Q14 3.4 13.4 3.9 L12.3 5.0 Z" fill="#db5a44" stroke="#c4442f" stroke-width="0.4"/><path d="M4.4 9.6 L6.6 11.5 L3.6 12.5 Z" fill="#7a6a50"/><path d="M4.0 11.4 L4.9 12.1 L3.6 12.5 Z" fill="#222"/></g></svg>
<div class="t" style="left:814.5px;top:81.6px;font-size:11px;color:#000;letter-spacing:0.000px;letter-spacing:-0.06px">Dynamic text 91</div>
<div class="hd" style="top:105px"></div>
<div class="cb" style="top:100px"></div>
<svg class="pi" style="left:796px;top:97.1px" width="14" height="15" viewBox="0 0 14 15"><rect x="0.5" y="1.5" width="11" height="12.5" fill="#fefefe" stroke="#7d8cb0"/><path d="M2.5 6.8H6" stroke="#c3cde2" stroke-width="1"/><rect x="2.5" y="8.8" width="7" height="3.7" fill="#cbd5e9" stroke="#a9b5d0" stroke-width="1"/><g transform="translate(-0.6,0.7)"><path d="M4.4 9.6 L10.1 3.1 L12.3 5.0 L6.6 11.5 Z" fill="#6ed65c" stroke="#45a541" stroke-width="0.7"/><path d="M5.6 10.4 L11.1 4.2" stroke="#a9f098" stroke-width="0.9"/><path d="M10.1 3.1 L11.3 1.7 Q12.6 1.0 13.4 2.2 Q14 3.4 13.4 3.9 L12.3 5.0 Z" fill="#db5a44" stroke="#c4442f" stroke-width="0.4"/><path d="M4.4 9.6 L6.6 11.5 L3.6 12.5 Z" fill="#7a6a50"/><path d="M4.0 11.4 L4.9 12.1 L3.6 12.5 Z" fill="#222"/></g></svg>
<div class="t" style="left:814.5px;top:97.6px;font-size:11px;color:#000;letter-spacing:0.000px;letter-spacing:-0.06px">Dynamic text 92</div>
<div class="hd" style="top:121px"></div>
<div class="cb" style="top:116px"></div>
<svg class="pi" style="left:796px;top:113.1px" width="14" height="15" viewBox="0 0 14 15"><rect x="0.5" y="1.5" width="11" height="12.5" fill="#fefefe" stroke="#7d8cb0"/><path d="M2.5 6.8H6" stroke="#c3cde2" stroke-width="1"/><rect x="2.5" y="8.8" width="7" height="3.7" fill="#cbd5e9" stroke="#a9b5d0" stroke-width="1"/><g transform="translate(-0.6,0.7)"><path d="M4.4 9.6 L10.1 3.1 L12.3 5.0 L6.6 11.5 Z" fill="#6ed65c" stroke="#45a541" stroke-width="0.7"/><path d="M5.6 10.4 L11.1 4.2" stroke="#a9f098" stroke-width="0.9"/><path d="M10.1 3.1 L11.3 1.7 Q12.6 1.0 13.4 2.2 Q14 3.4 13.4 3.9 L12.3 5.0 Z" fill="#db5a44" stroke="#c4442f" stroke-width="0.4"/><path d="M4.4 9.6 L6.6 11.5 L3.6 12.5 Z" fill="#7a6a50"/><path d="M4.0 11.4 L4.9 12.1 L3.6 12.5 Z" fill="#222"/></g></svg>
<div class="t" style="left:814.5px;top:113.6px;font-size:11px;color:#000;letter-spacing:0.000px;letter-spacing:-0.06px">Dynamic text 96</div>
<div class="hd" style="top:137px"></div>
<div class="cb" style="top:132px"></div>
<svg class="pi" style="left:796px;top:129.1px" width="14" height="15" viewBox="0 0 14 15"><rect x="0.5" y="1.5" width="11" height="12.5" fill="#fefefe" stroke="#7d8cb0"/><path d="M2.5 6.8H6" stroke="#c3cde2" stroke-width="1"/><rect x="2.5" y="8.8" width="7" height="3.7" fill="#cbd5e9" stroke="#a9b5d0" stroke-width="1"/><g transform="translate(-0.6,0.7)"><path d="M4.4 9.6 L10.1 3.1 L12.3 5.0 L6.6 11.5 Z" fill="#6ed65c" stroke="#45a541" stroke-width="0.7"/><path d="M5.6 10.4 L11.1 4.2" stroke="#a9f098" stroke-width="0.9"/><path d="M10.1 3.1 L11.3 1.7 Q12.6 1.0 13.4 2.2 Q14 3.4 13.4 3.9 L12.3 5.0 Z" fill="#db5a44" stroke="#c4442f" stroke-width="0.4"/><path d="M4.4 9.6 L6.6 11.5 L3.6 12.5 Z" fill="#7a6a50"/><path d="M4.0 11.4 L4.9 12.1 L3.6 12.5 Z" fill="#222"/></g></svg>
<div class="t" style="left:814.5px;top:129.6px;font-size:11px;color:#000;letter-spacing:0.000px;letter-spacing:-0.06px">Dynamic text 97</div>
<div class="hd" style="top:153px"></div>
<div class="cb" style="top:148px"></div>
<svg class="pi" style="left:796px;top:145.1px" width="14" height="15" viewBox="0 0 14 15"><rect x="0.5" y="1.5" width="11" height="12.5" fill="#fefefe" stroke="#7d8cb0"/><path d="M2.5 6.8H6" stroke="#c3cde2" stroke-width="1"/><rect x="2.5" y="8.8" width="7" height="3.7" fill="#cbd5e9" stroke="#a9b5d0" stroke-width="1"/><g transform="translate(-0.6,0.7)"><path d="M4.4 9.6 L10.1 3.1 L12.3 5.0 L6.6 11.5 Z" fill="#6ed65c" stroke="#45a541" stroke-width="0.7"/><path d="M5.6 10.4 L11.1 4.2" stroke="#a9f098" stroke-width="0.9"/><path d="M10.1 3.1 L11.3 1.7 Q12.6 1.0 13.4 2.2 Q14 3.4 13.4 3.9 L12.3 5.0 Z" fill="#db5a44" stroke="#c4442f" stroke-width="0.4"/><path d="M4.4 9.6 L6.6 11.5 L3.6 12.5 Z" fill="#7a6a50"/><path d="M4.0 11.4 L4.9 12.1 L3.6 12.5 Z" fill="#222"/></g></svg>
<div class="t" style="left:814.5px;top:145.6px;font-size:11px;color:#000;letter-spacing:0.000px;letter-spacing:-0.06px">Dynamic text 98</div>
<div class="hd" style="top:169px"></div>
<div class="cb" style="top:164px"></div>
<svg class="pi" style="left:796px;top:161.1px" width="14" height="15" viewBox="0 0 14 15"><rect x="0.5" y="1.5" width="11" height="12.5" fill="#fefefe" stroke="#7d8cb0"/><path d="M2.5 6.8H6" stroke="#c3cde2" stroke-width="1"/><rect x="2.5" y="8.8" width="7" height="3.7" fill="#cbd5e9" stroke="#a9b5d0" stroke-width="1"/><g transform="translate(-0.6,0.7)"><path d="M4.4 9.6 L10.1 3.1 L12.3 5.0 L6.6 11.5 Z" fill="#6ed65c" stroke="#45a541" stroke-width="0.7"/><path d="M5.6 10.4 L11.1 4.2" stroke="#a9f098" stroke-width="0.9"/><path d="M10.1 3.1 L11.3 1.7 Q12.6 1.0 13.4 2.2 Q14 3.4 13.4 3.9 L12.3 5.0 Z" fill="#db5a44" stroke="#c4442f" stroke-width="0.4"/><path d="M4.4 9.6 L6.6 11.5 L3.6 12.5 Z" fill="#7a6a50"/><path d="M4.0 11.4 L4.9 12.1 L3.6 12.5 Z" fill="#222"/></g></svg>
<div class="t" style="left:814.5px;top:161.6px;font-size:11px;color:#000;letter-spacing:0.000px;letter-spacing:-0.06px">Dynamic text 99</div>
<div class="hd" style="top:185px"></div>
<div class="cb" style="top:180px"></div>
<svg class="pi" style="left:796px;top:177.1px" width="14" height="15" viewBox="0 0 14 15"><rect x="0.5" y="1.5" width="11" height="12.5" fill="#fefefe" stroke="#7d8cb0"/><path d="M2.5 6.8H6" stroke="#c3cde2" stroke-width="1"/><rect x="2.5" y="8.8" width="7" height="3.7" fill="#cbd5e9" stroke="#a9b5d0" stroke-width="1"/><g transform="translate(-0.6,0.7)"><path d="M4.4 9.6 L10.1 3.1 L12.3 5.0 L6.6 11.5 Z" fill="#6ed65c" stroke="#45a541" stroke-width="0.7"/><path d="M5.6 10.4 L11.1 4.2" stroke="#a9f098" stroke-width="0.9"/><path d="M10.1 3.1 L11.3 1.7 Q12.6 1.0 13.4 2.2 Q14 3.4 13.4 3.9 L12.3 5.0 Z" fill="#db5a44" stroke="#c4442f" stroke-width="0.4"/><path d="M4.4 9.6 L6.6 11.5 L3.6 12.5 Z" fill="#7a6a50"/><path d="M4.0 11.4 L4.9 12.1 L3.6 12.5 Z" fill="#222"/></g></svg>
<div class="t" style="left:814.5px;top:177.6px;font-size:11px;color:#000;letter-spacing:0.000px;letter-spacing:-0.06px">Dynamic text 327</div>
<div class="hd" style="top:201px"></div>
<div class="cb" style="top:196px"></div>
<svg class="pi" style="left:796px;top:193.1px" width="14" height="15" viewBox="0 0 14 15"><rect x="0.5" y="1.5" width="11" height="12.5" fill="#fefefe" stroke="#7d8cb0"/><path d="M2.5 6.8H6" stroke="#c3cde2" stroke-width="1"/><rect x="2.5" y="8.8" width="7" height="3.7" fill="#cbd5e9" stroke="#a9b5d0" stroke-width="1"/><g transform="translate(-0.6,0.7)"><path d="M4.4 9.6 L10.1 3.1 L12.3 5.0 L6.6 11.5 Z" fill="#6ed65c" stroke="#45a541" stroke-width="0.7"/><path d="M5.6 10.4 L11.1 4.2" stroke="#a9f098" stroke-width="0.9"/><path d="M10.1 3.1 L11.3 1.7 Q12.6 1.0 13.4 2.2 Q14 3.4 13.4 3.9 L12.3 5.0 Z" fill="#db5a44" stroke="#c4442f" stroke-width="0.4"/><path d="M4.4 9.6 L6.6 11.5 L3.6 12.5 Z" fill="#7a6a50"/><path d="M4.0 11.4 L4.9 12.1 L3.6 12.5 Z" fill="#222"/></g></svg>
<div class="t" style="left:814.5px;top:193.6px;font-size:11px;color:#000;letter-spacing:0.000px;letter-spacing:-0.06px">Dynamic text 328</div>
<div class="hd" style="top:217px"></div>
<div class="cb" style="top:212px"></div>
<svg class="pi" style="left:796px;top:209.1px" width="14" height="15" viewBox="0 0 14 15"><rect x="0.5" y="1.5" width="11" height="12.5" fill="#fefefe" stroke="#7d8cb0"/><path d="M2.5 6.8H6" stroke="#c3cde2" stroke-width="1"/><rect x="2.5" y="8.8" width="7" height="3.7" fill="#cbd5e9" stroke="#a9b5d0" stroke-width="1"/><g transform="translate(-0.6,0.7)"><path d="M4.4 9.6 L10.1 3.1 L12.3 5.0 L6.6 11.5 Z" fill="#6ed65c" stroke="#45a541" stroke-width="0.7"/><path d="M5.6 10.4 L11.1 4.2" stroke="#a9f098" stroke-width="0.9"/><path d="M10.1 3.1 L11.3 1.7 Q12.6 1.0 13.4 2.2 Q14 3.4 13.4 3.9 L12.3 5.0 Z" fill="#db5a44" stroke="#c4442f" stroke-width="0.4"/><path d="M4.4 9.6 L6.6 11.5 L3.6 12.5 Z" fill="#7a6a50"/><path d="M4.0 11.4 L4.9 12.1 L3.6 12.5 Z" fill="#222"/></g></svg>
<div class="t" style="left:814.5px;top:209.6px;font-size:11px;color:#000;letter-spacing:0.000px;letter-spacing:-0.06px">Dynamic text 342</div>
<div class="hd" style="top:233px"></div>
<div class="cb" style="top:228px"></div>
<svg class="pi" style="left:796px;top:225.1px" width="14" height="15" viewBox="0 0 14 15"><rect x="0.5" y="1.5" width="11" height="12.5" fill="#fefefe" stroke="#7d8cb0"/><path d="M2.5 6.8H6" stroke="#c3cde2" stroke-width="1"/><rect x="2.5" y="8.8" width="7" height="3.7" fill="#cbd5e9" stroke="#a9b5d0" stroke-width="1"/><g transform="translate(-0.6,0.7)"><path d="M4.4 9.6 L10.1 3.1 L12.3 5.0 L6.6 11.5 Z" fill="#6ed65c" stroke="#45a541" stroke-width="0.7"/><path d="M5.6 10.4 L11.1 4.2" stroke="#a9f098" stroke-width="0.9"/><path d="M10.1 3.1 L11.3 1.7 Q12.6 1.0 13.4 2.2 Q14 3.4 13.4 3.9 L12.3 5.0 Z" fill="#db5a44" stroke="#c4442f" stroke-width="0.4"/><path d="M4.4 9.6 L6.6 11.5 L3.6 12.5 Z" fill="#7a6a50"/><path d="M4.0 11.4 L4.9 12.1 L3.6 12.5 Z" fill="#222"/></g></svg>
<div class="t" style="left:814.5px;top:225.6px;font-size:11px;color:#000;letter-spacing:0.000px;letter-spacing:-0.06px">Dynamic text 343</div>
<div class="hd" style="top:249px"></div>
<div class="cb" style="top:244px"></div>
<svg class="pi" style="left:796px;top:241.1px" width="14" height="15" viewBox="0 0 14 15"><rect x="0.5" y="1.5" width="11" height="12.5" fill="#fefefe" stroke="#7d8cb0"/><path d="M2.5 6.8H6" stroke="#c3cde2" stroke-width="1"/><rect x="2.5" y="8.8" width="7" height="3.7" fill="#cbd5e9" stroke="#a9b5d0" stroke-width="1"/><g transform="translate(-0.6,0.7)"><path d="M4.4 9.6 L10.1 3.1 L12.3 5.0 L6.6 11.5 Z" fill="#6ed65c" stroke="#45a541" stroke-width="0.7"/><path d="M5.6 10.4 L11.1 4.2" stroke="#a9f098" stroke-width="0.9"/><path d="M10.1 3.1 L11.3 1.7 Q12.6 1.0 13.4 2.2 Q14 3.4 13.4 3.9 L12.3 5.0 Z" fill="#db5a44" stroke="#c4442f" stroke-width="0.4"/><path d="M4.4 9.6 L6.6 11.5 L3.6 12.5 Z" fill="#7a6a50"/><path d="M4.0 11.4 L4.9 12.1 L3.6 12.5 Z" fill="#222"/></g></svg>
<div class="t" style="left:814.5px;top:241.6px;font-size:11px;color:#000;letter-spacing:0.000px;letter-spacing:-0.06px">Dynamic text 353</div>
<div class="hd" style="top:265px"></div>
<div class="cb" style="top:260px"></div>
<svg class="pi" style="left:796px;top:257.1px" width="14" height="15" viewBox="0 0 14 15"><rect x="0.5" y="1.5" width="11" height="12.5" fill="#fefefe" stroke="#7d8cb0"/><path d="M2.5 6.8H6" stroke="#c3cde2" stroke-width="1"/><rect x="2.5" y="8.8" width="7" height="3.7" fill="#cbd5e9" stroke="#a9b5d0" stroke-width="1"/><g transform="translate(-0.6,0.7)"><path d="M4.4 9.6 L10.1 3.1 L12.3 5.0 L6.6 11.5 Z" fill="#6ed65c" stroke="#45a541" stroke-width="0.7"/><path d="M5.6 10.4 L11.1 4.2" stroke="#a9f098" stroke-width="0.9"/><path d="M10.1 3.1 L11.3 1.7 Q12.6 1.0 13.4 2.2 Q14 3.4 13.4 3.9 L12.3 5.0 Z" fill="#db5a44" stroke="#c4442f" stroke-width="0.4"/><path d="M4.4 9.6 L6.6 11.5 L3.6 12.5 Z" fill="#7a6a50"/><path d="M4.0 11.4 L4.9 12.1 L3.6 12.5 Z" fill="#222"/></g></svg>
<div class="t" style="left:814.5px;top:257.6px;font-size:11px;color:#000;letter-spacing:0.000px;letter-spacing:-0.06px">Dynamic text 361</div>
<div class="hd" style="top:281px"></div>
<div class="cb" style="top:276px"></div>
<svg class="pi" style="left:796px;top:273.1px" width="14" height="15" viewBox="0 0 14 15"><rect x="0.5" y="1.5" width="11" height="12.5" fill="#fefefe" stroke="#7d8cb0"/><path d="M2.5 6.8H6" stroke="#c3cde2" stroke-width="1"/><rect x="2.5" y="8.8" width="7" height="3.7" fill="#cbd5e9" stroke="#a9b5d0" stroke-width="1"/><g transform="translate(-0.6,0.7)"><path d="M4.4 9.6 L10.1 3.1 L12.3 5.0 L6.6 11.5 Z" fill="#6ed65c" stroke="#45a541" stroke-width="0.7"/><path d="M5.6 10.4 L11.1 4.2" stroke="#a9f098" stroke-width="0.9"/><path d="M10.1 3.1 L11.3 1.7 Q12.6 1.0 13.4 2.2 Q14 3.4 13.4 3.9 L12.3 5.0 Z" fill="#db5a44" stroke="#c4442f" stroke-width="0.4"/><path d="M4.4 9.6 L6.6 11.5 L3.6 12.5 Z" fill="#7a6a50"/><path d="M4.0 11.4 L4.9 12.1 L3.6 12.5 Z" fill="#222"/></g></svg>
<div class="t" style="left:814.5px;top:273.6px;font-size:11px;color:#000;letter-spacing:0.000px;letter-spacing:-0.06px">Dynamic text 363</div>
<div class="hd" style="top:297px"></div>
<div class="cb" style="top:292px"></div>
<svg class="pi" style="left:796px;top:289.1px" width="14" height="15" viewBox="0 0 14 15"><rect x="0.5" y="1.5" width="11" height="12.5" fill="#fefefe" stroke="#7d8cb0"/><path d="M2.5 6.8H6" stroke="#c3cde2" stroke-width="1"/><rect x="2.5" y="8.8" width="7" height="3.7" fill="#cbd5e9" stroke="#a9b5d0" stroke-width="1"/><g transform="translate(-0.6,0.7)"><path d="M4.4 9.6 L10.1 3.1 L12.3 5.0 L6.6 11.5 Z" fill="#6ed65c" stroke="#45a541" stroke-width="0.7"/><path d="M5.6 10.4 L11.1 4.2" stroke="#a9f098" stroke-width="0.9"/><path d="M10.1 3.1 L11.3 1.7 Q12.6 1.0 13.4 2.2 Q14 3.4 13.4 3.9 L12.3 5.0 Z" fill="#db5a44" stroke="#c4442f" stroke-width="0.4"/><path d="M4.4 9.6 L6.6 11.5 L3.6 12.5 Z" fill="#7a6a50"/><path d="M4.0 11.4 L4.9 12.1 L3.6 12.5 Z" fill="#222"/></g></svg>
<div class="t" style="left:814.5px;top:289.6px;font-size:11px;color:#000;letter-spacing:0.000px;letter-spacing:-0.06px">Dynamic text 365</div>
<div class="hd" style="top:313px"></div>
<div class="cb" style="top:308px"></div>
<svg class="pi" style="left:796px;top:305.1px" width="14" height="15" viewBox="0 0 14 15"><rect x="0.5" y="1.5" width="11" height="12.5" fill="#fefefe" stroke="#7d8cb0"/><path d="M2.5 6.8H6" stroke="#c3cde2" stroke-width="1"/><rect x="2.5" y="8.8" width="7" height="3.7" fill="#cbd5e9" stroke="#a9b5d0" stroke-width="1"/><g transform="translate(-0.6,0.7)"><path d="M4.4 9.6 L10.1 3.1 L12.3 5.0 L6.6 11.5 Z" fill="#6ed65c" stroke="#45a541" stroke-width="0.7"/><path d="M5.6 10.4 L11.1 4.2" stroke="#a9f098" stroke-width="0.9"/><path d="M10.1 3.1 L11.3 1.7 Q12.6 1.0 13.4 2.2 Q14 3.4 13.4 3.9 L12.3 5.0 Z" fill="#db5a44" stroke="#c4442f" stroke-width="0.4"/><path d="M4.4 9.6 L6.6 11.5 L3.6 12.5 Z" fill="#7a6a50"/><path d="M4.0 11.4 L4.9 12.1 L3.6 12.5 Z" fill="#222"/></g></svg>
<div class="t" style="left:814.5px;top:305.6px;font-size:11px;color:#000;letter-spacing:0.000px;letter-spacing:-0.06px">Dynamic text 367</div>
<div class="hd" style="top:329px"></div>
<div class="cb" style="top:324px"></div>
<svg class="pi" style="left:796px;top:321.1px" width="14" height="15" viewBox="0 0 14 15"><rect x="0.5" y="1.5" width="11" height="12.5" fill="#fefefe" stroke="#7d8cb0"/><path d="M2.5 6.8H6" stroke="#c3cde2" stroke-width="1"/><rect x="2.5" y="8.8" width="7" height="3.7" fill="#cbd5e9" stroke="#a9b5d0" stroke-width="1"/><g transform="translate(-0.6,0.7)"><path d="M4.4 9.6 L10.1 3.1 L12.3 5.0 L6.6 11.5 Z" fill="#6ed65c" stroke="#45a541" stroke-width="0.7"/><path d="M5.6 10.4 L11.1 4.2" stroke="#a9f098" stroke-width="0.9"/><path d="M10.1 3.1 L11.3 1.7 Q12.6 1.0 13.4 2.2 Q14 3.4 13.4 3.9 L12.3 5.0 Z" fill="#db5a44" stroke="#c4442f" stroke-width="0.4"/><path d="M4.4 9.6 L6.6 11.5 L3.6 12.5 Z" fill="#7a6a50"/><path d="M4.0 11.4 L4.9 12.1 L3.6 12.5 Z" fill="#222"/></g></svg>
<div class="t" style="left:814.5px;top:321.6px;font-size:11px;color:#000;letter-spacing:0.000px;letter-spacing:-0.06px">Dynamic text 369</div>
<div class="hd" style="top:345px"></div>
<div class="cb" style="top:340px"></div>
<svg class="pi" style="left:796px;top:337.1px" width="14" height="15" viewBox="0 0 14 15"><rect x="0.5" y="1.5" width="11" height="12.5" fill="#fefefe" stroke="#7d8cb0"/><path d="M2.5 6.8H6" stroke="#c3cde2" stroke-width="1"/><rect x="2.5" y="8.8" width="7" height="3.7" fill="#cbd5e9" stroke="#a9b5d0" stroke-width="1"/><g transform="translate(-0.6,0.7)"><path d="M4.4 9.6 L10.1 3.1 L12.3 5.0 L6.6 11.5 Z" fill="#6ed65c" stroke="#45a541" stroke-width="0.7"/><path d="M5.6 10.4 L11.1 4.2" stroke="#a9f098" stroke-width="0.9"/><path d="M10.1 3.1 L11.3 1.7 Q12.6 1.0 13.4 2.2 Q14 3.4 13.4 3.9 L12.3 5.0 Z" fill="#db5a44" stroke="#c4442f" stroke-width="0.4"/><path d="M4.4 9.6 L6.6 11.5 L3.6 12.5 Z" fill="#7a6a50"/><path d="M4.0 11.4 L4.9 12.1 L3.6 12.5 Z" fill="#222"/></g></svg>
<div class="t" style="left:814.5px;top:337.6px;font-size:11px;color:#000;letter-spacing:0.000px;letter-spacing:-0.06px">Dynamic text 371</div>
<div class="hd" style="top:361px"></div>
<div class="cb" style="top:356px"></div>
<svg class="pi" style="left:796px;top:353.1px" width="14" height="15" viewBox="0 0 14 15"><rect x="0.5" y="1.5" width="11" height="12.5" fill="#fefefe" stroke="#7d8cb0"/><path d="M2.5 6.8H6" stroke="#c3cde2" stroke-width="1"/><rect x="2.5" y="8.8" width="7" height="3.7" fill="#cbd5e9" stroke="#a9b5d0" stroke-width="1"/><g transform="translate(-0.6,0.7)"><path d="M4.4 9.6 L10.1 3.1 L12.3 5.0 L6.6 11.5 Z" fill="#6ed65c" stroke="#45a541" stroke-width="0.7"/><path d="M5.6 10.4 L11.1 4.2" stroke="#a9f098" stroke-width="0.9"/><path d="M10.1 3.1 L11.3 1.7 Q12.6 1.0 13.4 2.2 Q14 3.4 13.4 3.9 L12.3 5.0 Z" fill="#db5a44" stroke="#c4442f" stroke-width="0.4"/><path d="M4.4 9.6 L6.6 11.5 L3.6 12.5 Z" fill="#7a6a50"/><path d="M4.0 11.4 L4.9 12.1 L3.6 12.5 Z" fill="#222"/></g></svg>
<div class="t" style="left:814.5px;top:353.6px;font-size:11px;color:#000;letter-spacing:0.000px;letter-spacing:-0.06px">Dynamic text 373</div>
<div class="hd" style="top:377px"></div>
<div class="cb" style="top:372px"></div>
<svg class="pi" style="left:796px;top:369.1px" width="14" height="15" viewBox="0 0 14 15"><rect x="0.5" y="1.5" width="11" height="12.5" fill="#fefefe" stroke="#7d8cb0"/><path d="M2.5 6.8H6" stroke="#c3cde2" stroke-width="1"/><rect x="2.5" y="8.8" width="7" height="3.7" fill="#cbd5e9" stroke="#a9b5d0" stroke-width="1"/><g transform="translate(-0.6,0.7)"><path d="M4.4 9.6 L10.1 3.1 L12.3 5.0 L6.6 11.5 Z" fill="#6ed65c" stroke="#45a541" stroke-width="0.7"/><path d="M5.6 10.4 L11.1 4.2" stroke="#a9f098" stroke-width="0.9"/><path d="M10.1 3.1 L11.3 1.7 Q12.6 1.0 13.4 2.2 Q14 3.4 13.4 3.9 L12.3 5.0 Z" fill="#db5a44" stroke="#c4442f" stroke-width="0.4"/><path d="M4.4 9.6 L6.6 11.5 L3.6 12.5 Z" fill="#7a6a50"/><path d="M4.0 11.4 L4.9 12.1 L3.6 12.5 Z" fill="#222"/></g></svg>
<div class="t" style="left:814.5px;top:369.6px;font-size:11px;color:#000;letter-spacing:0.000px;letter-spacing:-0.06px">Dynamic text 378</div>
<div class="hd" style="top:393px"></div>
<div class="cb" style="top:388px"></div>
<svg class="pi" style="left:796px;top:385.1px" width="14" height="15" viewBox="0 0 14 15"><rect x="0.5" y="1.5" width="11" height="12.5" fill="#fefefe" stroke="#7d8cb0"/><path d="M2.5 6.8H6" stroke="#c3cde2" stroke-width="1"/><rect x="2.5" y="8.8" width="7" height="3.7" fill="#cbd5e9" stroke="#a9b5d0" stroke-width="1"/><g transform="translate(-0.6,0.7)"><path d="M4.4 9.6 L10.1 3.1 L12.3 5.0 L6.6 11.5 Z" fill="#6ed65c" stroke="#45a541" stroke-width="0.7"/><path d="M5.6 10.4 L11.1 4.2" stroke="#a9f098" stroke-width="0.9"/><path d="M10.1 3.1 L11.3 1.7 Q12.6 1.0 13.4 2.2 Q14 3.4 13.4 3.9 L12.3 5.0 Z" fill="#db5a44" stroke="#c4442f" stroke-width="0.4"/><path d="M4.4 9.6 L6.6 11.5 L3.6 12.5 Z" fill="#7a6a50"/><path d="M4.0 11.4 L4.9 12.1 L3.6 12.5 Z" fill="#222"/></g></svg>
<div class="t" style="left:814.5px;top:385.6px;font-size:11px;color:#000;letter-spacing:0.000px;letter-spacing:-0.06px">Dynamic text 380</div>
<div class="hd" style="top:409px"></div>
<div class="cb" style="top:404px"></div>
<svg class="pi" style="left:796px;top:401.1px" width="14" height="15" viewBox="0 0 14 15"><rect x="0.5" y="1.5" width="11" height="12.5" fill="#fefefe" stroke="#7d8cb0"/><path d="M2.5 6.8H6" stroke="#c3cde2" stroke-width="1"/><rect x="2.5" y="8.8" width="7" height="3.7" fill="#cbd5e9" stroke="#a9b5d0" stroke-width="1"/><g transform="translate(-0.6,0.7)"><path d="M4.4 9.6 L10.1 3.1 L12.3 5.0 L6.6 11.5 Z" fill="#6ed65c" stroke="#45a541" stroke-width="0.7"/><path d="M5.6 10.4 L11.1 4.2" stroke="#a9f098" stroke-width="0.9"/><path d="M10.1 3.1 L11.3 1.7 Q12.6 1.0 13.4 2.2 Q14 3.4 13.4 3.9 L12.3 5.0 Z" fill="#db5a44" stroke="#c4442f" stroke-width="0.4"/><path d="M4.4 9.6 L6.6 11.5 L3.6 12.5 Z" fill="#7a6a50"/><path d="M4.0 11.4 L4.9 12.1 L3.6 12.5 Z" fill="#222"/></g></svg>
<div class="t" style="left:814.5px;top:401.6px;font-size:11px;color:#000;letter-spacing:0.000px;letter-spacing:-0.06px">Dynamic text 385</div>
<div class="hd" style="top:425px"></div>
<div class="cb" style="top:420px"></div>
<svg class="pi" style="left:796px;top:417.1px" width="14" height="15" viewBox="0 0 14 15"><rect x="0.5" y="1.5" width="11" height="12.5" fill="#fefefe" stroke="#7d8cb0"/><path d="M2.5 6.8H6" stroke="#c3cde2" stroke-width="1"/><rect x="2.5" y="8.8" width="7" height="3.7" fill="#cbd5e9" stroke="#a9b5d0" stroke-width="1"/><g transform="translate(-0.6,0.7)"><path d="M4.4 9.6 L10.1 3.1 L12.3 5.0 L6.6 11.5 Z" fill="#6ed65c" stroke="#45a541" stroke-width="0.7"/><path d="M5.6 10.4 L11.1 4.2" stroke="#a9f098" stroke-width="0.9"/><path d="M10.1 3.1 L11.3 1.7 Q12.6 1.0 13.4 2.2 Q14 3.4 13.4 3.9 L12.3 5.0 Z" fill="#db5a44" stroke="#c4442f" stroke-width="0.4"/><path d="M4.4 9.6 L6.6 11.5 L3.6 12.5 Z" fill="#7a6a50"/><path d="M4.0 11.4 L4.9 12.1 L3.6 12.5 Z" fill="#222"/></g></svg>
<div class="t" style="left:814.5px;top:417.6px;font-size:11px;color:#000;letter-spacing:0.000px;letter-spacing:-0.06px">Dynamic text 387</div>
<div class="hd" style="top:441px"></div>
<div class="cb" style="top:436px"></div>
<svg class="pi" style="left:796px;top:433.1px" width="14" height="15" viewBox="0 0 14 15"><rect x="0.5" y="1.5" width="11" height="12.5" fill="#fefefe" stroke="#7d8cb0"/><path d="M2.5 6.8H6" stroke="#c3cde2" stroke-width="1"/><rect x="2.5" y="8.8" width="7" height="3.7" fill="#cbd5e9" stroke="#a9b5d0" stroke-width="1"/><g transform="translate(-0.6,0.7)"><path d="M4.4 9.6 L10.1 3.1 L12.3 5.0 L6.6 11.5 Z" fill="#6ed65c" stroke="#45a541" stroke-width="0.7"/><path d="M5.6 10.4 L11.1 4.2" stroke="#a9f098" stroke-width="0.9"/><path d="M10.1 3.1 L11.3 1.7 Q12.6 1.0 13.4 2.2 Q14 3.4 13.4 3.9 L12.3 5.0 Z" fill="#db5a44" stroke="#c4442f" stroke-width="0.4"/><path d="M4.4 9.6 L6.6 11.5 L3.6 12.5 Z" fill="#7a6a50"/><path d="M4.0 11.4 L4.9 12.1 L3.6 12.5 Z" fill="#222"/></g></svg>
<div class="t" style="left:814.5px;top:433.6px;font-size:11px;color:#000;letter-spacing:0.000px;letter-spacing:-0.06px">Dynamic text 390</div>
<div class="hd" style="top:457px"></div>
<div class="cb" style="top:452px"></div>
<svg class="pi" style="left:796px;top:449.1px" width="14" height="15" viewBox="0 0 14 15"><rect x="0.5" y="1.5" width="11" height="12.5" fill="#fefefe" stroke="#7d8cb0"/><path d="M2.5 6.8H6" stroke="#c3cde2" stroke-width="1"/><rect x="2.5" y="8.8" width="7" height="3.7" fill="#cbd5e9" stroke="#a9b5d0" stroke-width="1"/><g transform="translate(-0.6,0.7)"><path d="M4.4 9.6 L10.1 3.1 L12.3 5.0 L6.6 11.5 Z" fill="#6ed65c" stroke="#45a541" stroke-width="0.7"/><path d="M5.6 10.4 L11.1 4.2" stroke="#a9f098" stroke-width="0.9"/><path d="M10.1 3.1 L11.3 1.7 Q12.6 1.0 13.4 2.2 Q14 3.4 13.4 3.9 L12.3 5.0 Z" fill="#db5a44" stroke="#c4442f" stroke-width="0.4"/><path d="M4.4 9.6 L6.6 11.5 L3.6 12.5 Z" fill="#7a6a50"/><path d="M4.0 11.4 L4.9 12.1 L3.6 12.5 Z" fill="#222"/></g></svg>
<div class="t" style="left:814.5px;top:449.6px;font-size:11px;color:#000;letter-spacing:0.000px;letter-spacing:-0.06px">Dynamic text 395</div>
<div class="hd" style="top:473px"></div>
<div class="cb" style="top:468px"></div>
<svg class="pi" style="left:796px;top:465.1px" width="14" height="15" viewBox="0 0 14 15"><rect x="0.5" y="1.5" width="11" height="12.5" fill="#fefefe" stroke="#7d8cb0"/><path d="M2.5 6.8H6" stroke="#c3cde2" stroke-width="1"/><rect x="2.5" y="8.8" width="7" height="3.7" fill="#cbd5e9" stroke="#a9b5d0" stroke-width="1"/><g transform="translate(-0.6,0.7)"><path d="M4.4 9.6 L10.1 3.1 L12.3 5.0 L6.6 11.5 Z" fill="#6ed65c" stroke="#45a541" stroke-width="0.7"/><path d="M5.6 10.4 L11.1 4.2" stroke="#a9f098" stroke-width="0.9"/><path d="M10.1 3.1 L11.3 1.7 Q12.6 1.0 13.4 2.2 Q14 3.4 13.4 3.9 L12.3 5.0 Z" fill="#db5a44" stroke="#c4442f" stroke-width="0.4"/><path d="M4.4 9.6 L6.6 11.5 L3.6 12.5 Z" fill="#7a6a50"/><path d="M4.0 11.4 L4.9 12.1 L3.6 12.5 Z" fill="#222"/></g></svg>
<div class="t" style="left:814.5px;top:465.6px;font-size:11px;color:#000;letter-spacing:0.000px;letter-spacing:-0.06px">Dynamic text 449</div>
<div class="hd" style="top:489px"></div>
<div class="cb" style="top:484px"></div>
<svg class="pi" style="left:796px;top:481.1px" width="14" height="15" viewBox="0 0 14 15"><rect x="0.5" y="1.5" width="11" height="12.5" fill="#fefefe" stroke="#7d8cb0"/><path d="M2.5 6.8H6" stroke="#c3cde2" stroke-width="1"/><rect x="2.5" y="8.8" width="7" height="3.7" fill="#cbd5e9" stroke="#a9b5d0" stroke-width="1"/><g transform="translate(-0.6,0.7)"><path d="M4.4 9.6 L10.1 3.1 L12.3 5.0 L6.6 11.5 Z" fill="#6ed65c" stroke="#45a541" stroke-width="0.7"/><path d="M5.6 10.4 L11.1 4.2" stroke="#a9f098" stroke-width="0.9"/><path d="M10.1 3.1 L11.3 1.7 Q12.6 1.0 13.4 2.2 Q14 3.4 13.4 3.9 L12.3 5.0 Z" fill="#db5a44" stroke="#c4442f" stroke-width="0.4"/><path d="M4.4 9.6 L6.6 11.5 L3.6 12.5 Z" fill="#7a6a50"/><path d="M4.0 11.4 L4.9 12.1 L3.6 12.5 Z" fill="#222"/></g></svg>
<div class="t" style="left:814.5px;top:481.6px;font-size:11px;color:#000;letter-spacing:0.000px;letter-spacing:-0.06px">Dynamic text 450</div>
<div class="hd" style="top:505px"></div>
<div class="cb" style="top:500px"></div>
<svg class="pi" style="left:796px;top:497.1px" width="14" height="15" viewBox="0 0 14 15"><rect x="0.5" y="1.5" width="11" height="12.5" fill="#fefefe" stroke="#7d8cb0"/><path d="M2.5 6.8H6" stroke="#c3cde2" stroke-width="1"/><rect x="2.5" y="8.8" width="7" height="3.7" fill="#cbd5e9" stroke="#a9b5d0" stroke-width="1"/><g transform="translate(-0.6,0.7)"><path d="M4.4 9.6 L10.1 3.1 L12.3 5.0 L6.6 11.5 Z" fill="#6ed65c" stroke="#45a541" stroke-width="0.7"/><path d="M5.6 10.4 L11.1 4.2" stroke="#a9f098" stroke-width="0.9"/><path d="M10.1 3.1 L11.3 1.7 Q12.6 1.0 13.4 2.2 Q14 3.4 13.4 3.9 L12.3 5.0 Z" fill="#db5a44" stroke="#c4442f" stroke-width="0.4"/><path d="M4.4 9.6 L6.6 11.5 L3.6 12.5 Z" fill="#7a6a50"/><path d="M4.0 11.4 L4.9 12.1 L3.6 12.5 Z" fill="#222"/></g></svg>
<div class="t" style="left:814.5px;top:497.6px;font-size:11px;color:#000;letter-spacing:0.000px;letter-spacing:-0.06px">Dynamic text 453</div>
<div class="hd" style="top:521px"></div>
<div class="cb" style="top:516px"></div>
<svg class="pi" style="left:796px;top:513.1px" width="14" height="15" viewBox="0 0 14 15"><rect x="0.5" y="1.5" width="11" height="12.5" fill="#fefefe" stroke="#7d8cb0"/><path d="M2.5 6.8H6" stroke="#c3cde2" stroke-width="1"/><rect x="2.5" y="8.8" width="7" height="3.7" fill="#cbd5e9" stroke="#a9b5d0" stroke-width="1"/><g transform="translate(-0.6,0.7)"><path d="M4.4 9.6 L10.1 3.1 L12.3 5.0 L6.6 11.5 Z" fill="#6ed65c" stroke="#45a541" stroke-width="0.7"/><path d="M5.6 10.4 L11.1 4.2" stroke="#a9f098" stroke-width="0.9"/><path d="M10.1 3.1 L11.3 1.7 Q12.6 1.0 13.4 2.2 Q14 3.4 13.4 3.9 L12.3 5.0 Z" fill="#db5a44" stroke="#c4442f" stroke-width="0.4"/><path d="M4.4 9.6 L6.6 11.5 L3.6 12.5 Z" fill="#7a6a50"/><path d="M4.0 11.4 L4.9 12.1 L3.6 12.5 Z" fill="#222"/></g></svg>
<div class="t" style="left:814.5px;top:513.6px;font-size:11px;color:#000;letter-spacing:0.000px;letter-spacing:-0.06px">Dynamic text 454</div>
<div class="hd" style="top:537px"></div>
<div class="cb" style="top:532px"></div>
<svg class="pi" style="left:796px;top:529.1px" width="14" height="15" viewBox="0 0 14 15"><rect x="0.5" y="1.5" width="11" height="12.5" fill="#fefefe" stroke="#7d8cb0"/><path d="M2.5 6.8H6" stroke="#c3cde2" stroke-width="1"/><rect x="2.5" y="8.8" width="7" height="3.7" fill="#cbd5e9" stroke="#a9b5d0" stroke-width="1"/><g transform="translate(-0.6,0.7)"><path d="M4.4 9.6 L10.1 3.1 L12.3 5.0 L6.6 11.5 Z" fill="#6ed65c" stroke="#45a541" stroke-width="0.7"/><path d="M5.6 10.4 L11.1 4.2" stroke="#a9f098" stroke-width="0.9"/><path d="M10.1 3.1 L11.3 1.7 Q12.6 1.0 13.4 2.2 Q14 3.4 13.4 3.9 L12.3 5.0 Z" fill="#db5a44" stroke="#c4442f" stroke-width="0.4"/><path d="M4.4 9.6 L6.6 11.5 L3.6 12.5 Z" fill="#7a6a50"/><path d="M4.0 11.4 L4.9 12.1 L3.6 12.5 Z" fill="#222"/></g></svg>
<div class="a" style="left:811px;top:529px;width:91px;height:16px;background:#efefef"></div>
<div class="t" style="left:814.5px;top:529.6px;font-size:11px;color:#000;letter-spacing:0.000px;letter-spacing:-0.06px">Dynamic text 470</div>
<div class="hd" style="top:553px"></div>
<div class="cb" style="top:548px"></div>
<svg class="pi" style="left:796px;top:545.1px" width="14" height="15" viewBox="0 0 14 15"><rect x="0.5" y="1.5" width="11" height="12.5" fill="#fefefe" stroke="#7d8cb0"/><path d="M2.5 6.8H6" stroke="#c3cde2" stroke-width="1"/><rect x="2.5" y="8.8" width="7" height="3.7" fill="#cbd5e9" stroke="#a9b5d0" stroke-width="1"/><g transform="translate(-0.6,0.7)"><path d="M4.4 9.6 L10.1 3.1 L12.3 5.0 L6.6 11.5 Z" fill="#6ed65c" stroke="#45a541" stroke-width="0.7"/><path d="M5.6 10.4 L11.1 4.2" stroke="#a9f098" stroke-width="0.9"/><path d="M10.1 3.1 L11.3 1.7 Q12.6 1.0 13.4 2.2 Q14 3.4 13.4 3.9 L12.3 5.0 Z" fill="#db5a44" stroke="#c4442f" stroke-width="0.4"/><path d="M4.4 9.6 L6.6 11.5 L3.6 12.5 Z" fill="#7a6a50"/><path d="M4.0 11.4 L4.9 12.1 L3.6 12.5 Z" fill="#222"/></g></svg>
<div class="t" style="left:814.5px;top:545.6px;font-size:11px;color:#000;letter-spacing:0.000px;letter-spacing:-0.06px">Dynamic text 471</div>
</div>
<div class="a" style="left:943px;top:165px;width:17px;height:557px;background:#f4f4f4"></div>
<div class="a" style="left:947px;top:171px;width:0;height:0;border-left:4px solid transparent;border-right:4px solid transparent;border-bottom:4px solid #000"></div>
<div class="a" style="left:947px;top:711px;width:0;height:0;border-left:4px solid transparent;border-right:4px solid transparent;border-top:4px solid #000"></div>
<div class="a" style="left:945px;top:472px;width:14px;height:156px;border:1px solid #a3a3a3;border-radius:2px;background:linear-gradient(90deg,#f4f4f4,#e2e2e2 50%,#cfcfcf)"></div>
<div class="a" style="left:949px;top:547px;width:7px;height:1px;background:#5a5a5a;box-shadow:0 1px 0 #fafafa"></div>
<div class="a" style="left:949px;top:549px;width:7px;height:1px;background:#5a5a5a;box-shadow:0 1px 0 #fafafa"></div>
<div class="a" style="left:949px;top:551px;width:7px;height:1px;background:#5a5a5a;box-shadow:0 1px 0 #fafafa"></div>
<div class="a" style="left:964px;top:148.4px;width:18px;height:115.6px;background:linear-gradient(90deg,#fdf1cc 0,#fce3a0 45%,#fbd274 100%);border-radius:0 2px 2px 0"></div>
<svg class="a" style="left:967px;top:150.6px" width="13" height="14" viewBox="0 0 13 14"><path d="M0.5 0.5H9L12.5 4V13.5H0.5Z" fill="#fff" stroke="#59627a"/><path d="M9 0.5V4H12.5" fill="#e4e8f0" stroke="#59627a" stroke-width=".7"/><circle cx="6.5" cy="8.4" r="3.7" fill="#1b3f9f"/><path d="M6.5 6.1V6.9M6.5 7.8V10.8" stroke="#fff" stroke-width="1.4"/></svg>
<div class="t" style="left:980.4px;top:172.6px;font-size:11.3px;color:#5f5b50;-webkit-text-stroke:0;transform-origin:0 0;transform:rotate(90deg);letter-spacing:-0.02px">File properties</div>
<div class="a" style="left:0;top:723px;width:986px;height:22px;background:linear-gradient(#ffffff 0,#e1ecfb 6%,#d6e4f8 35%,#c8daf5 40%,#d2e1f7 80%,#dde9fb 100%);border-top:1px solid #5f80b8"></div>
<div class="a" style="left:581px;top:724px;width:405px;height:21px;border-left:1px solid #5a7ab2;background:linear-gradient(#c0d5f4 0,#aac4ec 35%,#90b0e2 40%,#a2beea 80%,#b4ccf1 100%)"></div>
<div class="t" style="left:11.8px;top:728.0px;font-size:11.3px;color:#15428b;letter-spacing:-0.451px">Ready</div>
<div class="t" style="left:597.3px;top:728.0px;font-size:11.3px;color:#15428b;letter-spacing:-0.195px">Refresh</div>
<div class="t" style="left:732.5px;top:728.0px;font-size:11.3px;color:#15428b;letter-spacing:-0.352px">100%</div>
<div class="a" style="left:645px;top:726px;width:76px;height:20px;border:1px solid #c9dcf6;border-bottom:none;border-radius:3px 3px 0 0;background:linear-gradient(#c9ddf8,#b4cef1 50%,#a9c6ee 55%,#c0d6f5)"></div>
<div class="a" style="left:675px;top:727px;width:1px;height:17px;background:#c9dcf6"></div>
<div class="a" style="left:699px;top:727px;width:1px;height:17px;background:#c9dcf6"></div>
<div class="a" style="left:655px;top:731px;width:10px;height:9px;background:#bdbdbd;border:1px solid #8e8e8e"></div>
<div class="a" style="left:649px;top:727px;width:11px;height:11px;background:#f4f4f4;border:1px solid #3a4a6a"></div>
<div class="a" style="left:651px;top:729px;width:3px;height:3px;background:#d83a20"></div>
<div class="a" style="left:655px;top:729px;width:3px;height:3px;background:#2fa830"></div>
<div class="a" style="left:651px;top:733px;width:3px;height:3px;background:#e88a18"></div>
<div class="a" style="left:655px;top:733px;width:3px;height:3px;background:#2040d0"></div>
<div class="a" style="left:649px;top:740px;width:16px;height:3px;background:#5a5a5a"></div>
<div class="a" style="left:667px;top:734px;width:0;height:0;border-left:3px solid transparent;border-right:3px solid transparent;border-top:3px solid #5a7ab0"></div>
<svg class="a" style="left:678px;top:727px" width="18" height="17" viewBox="0 0 18 17"><path d="M5.2 9.5 V3.6 Q5.2 2.4 6.3 2.4 Q7.4 2.4 7.4 3.6 V2.2 Q7.4 1 8.5 1 Q9.7 1 9.7 2.2 V3 Q9.7 1.9 10.8 1.9 Q12 1.9 12 3 V4.4 Q12 3.4 13 3.4 Q14.2 3.4 14.2 4.6 V10.5 Q14.2 16 9.5 16 H8.5 Q6 16 4.6 13.4 L1.8 9.2 Q1.3 8 2.4 7.6 Q3.4 7.3 4.2 8.4 Z" fill="#fff" stroke="#5a6270" stroke-width=".9"/><path d="M7.4 3.6V8 M9.7 3V8 M12 4.4V8.4" stroke="#8a919c" stroke-width=".8"/></svg>
<div class="a" style="left:704px;top:729px;width:15px;height:14px;border:1px dashed #14245c;background:#dce8fa"></div>
<svg class="a" style="left:704px;top:729px" width="15" height="14" viewBox="0 0 15 14"><path d="M3.5 6V3.5H6M9 3.5H11.5V6M11.5 8V10.5H9M6 10.5H3.5V8M3.5 3.5L6.2 6M11.5 3.5L8.8 6M11.5 10.5L8.8 8M3.5 10.5L6.2 8" stroke="#1a2f7a" stroke-width="1.1" fill="none"/></svg>
<div class="a" style="left:771px;top:726px;width:16px;height:16px;border-radius:50%;border:1px solid #6a7890;background:linear-gradient(#fbfcfe,#d5e0f0 50%,#c2d0e6);box-shadow:0 0 0 1px rgba(230,240,252,.7)"></div>
<div class="a" style="left:775px;top:733px;width:8px;height:2px;background:#4a5670"></div>
<div class="a" style="left:947px;top:726px;width:16px;height:16px;border-radius:50%;border:1px solid #6a7890;background:linear-gradient(#fbfcfe,#d5e0f0 50%,#c2d0e6);box-shadow:0 0 0 1px rgba(230,240,252,.7)"></div>
<div class="a" style="left:951px;top:733px;width:8px;height:2px;background:#4a5670"></div>
<div class="a" style="left:954px;top:730px;width:2px;height:8px;background:#4a5670"></div>
<div class="a" style="left:794px;top:734px;width:146px;height:1px;background:#89a7d6;box-shadow:0 1px 0 #eef5ff"></div>
<svg class="a" style="left:862px;top:728px" width="11" height="14" viewBox="0 0 11 14"><path d="M1 1 H10 V8.5 L5.5 13 L1 8.5Z" fill="#e9eff9" stroke="#5f6f8c"/><path d="M5.5 4V8" stroke="#8a9ab8"/></svg>
<div class="a" style="left:979px;top:739px;width:2px;height:2px;background:#5f84c4;box-shadow:1px 1px 0 #e8f1fd"></div>
<div class="a" style="left:975px;top:739px;width:2px;height:2px;background:#5f84c4;box-shadow:1px 1px 0 #e8f1fd"></div>
<div class="a" style="left:979px;top:735px;width:2px;height:2px;background:#5f84c4;box-shadow:1px 1px 0 #e8f1fd"></div>
<div class="a" style="left:971px;top:739px;width:2px;height:2px;background:#5f84c4;box-shadow:1px 1px 0 #e8f1fd"></div>
<div class="a" style="left:975px;top:735px;width:2px;height:2px;background:#5f84c4;box-shadow:1px 1px 0 #e8f1fd"></div>
<div class="a" style="left:979px;top:731px;width:2px;height:2px;background:#5f84c4;box-shadow:1px 1px 0 #e8f1fd"></div>
<div class="a" style="left:0;top:744.5px;width:986px;height:2.5px;background:#3f4e60"></div>
<div class="a" style="left:20px;top:745px;width:28px;height:2px;background:#f4f4f4"></div>
<div class="a" style="left:94.6px;top:745px;width:29px;height:2px;background:#f4f4f4"></div>
<div class="a" style="left:169.5px;top:745px;width:29px;height:2px;background:#f4f4f4"></div>
<div class="a" style="left:0;top:5px;width:1px;height:740px;background:#a9c0dc"></div>
<div class="a" style="left:985px;top:4px;width:1px;height:741px;background:#33507c"></div>
</div></body></html>
